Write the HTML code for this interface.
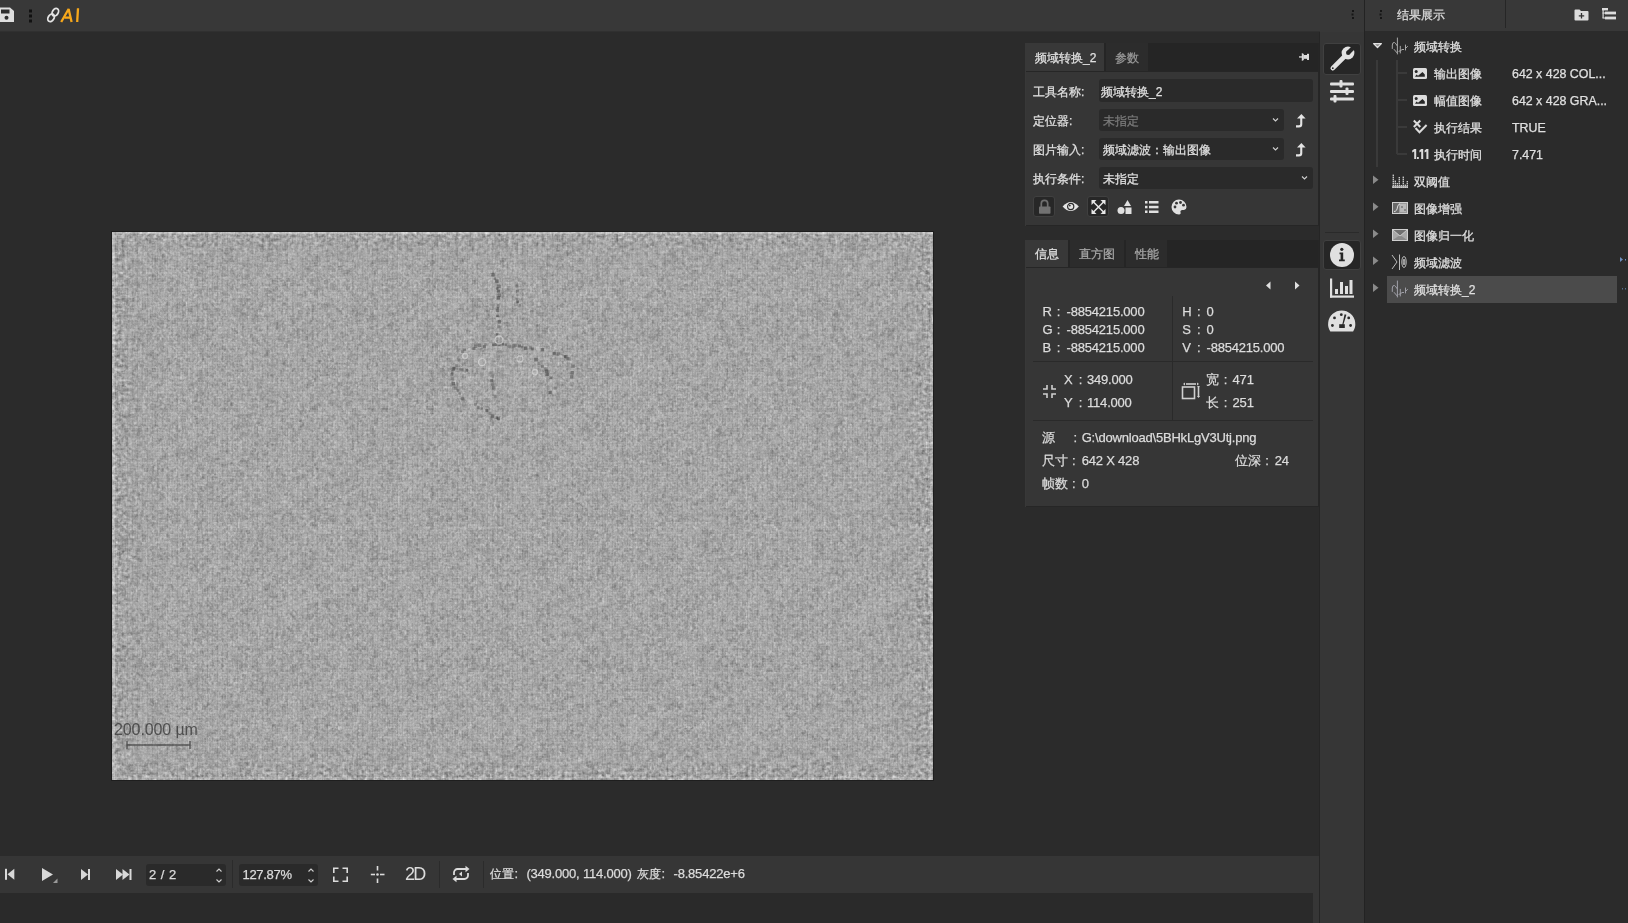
<!DOCTYPE html>
<html><head><meta charset="utf-8">
<style>
*{box-sizing:border-box;margin:0;padding:0}
html,body{width:1628px;height:923px;overflow:hidden;background:#2b2b2b;font-family:"Liberation Sans",sans-serif;font-size:12px;color:#dcdcdc}
.a{position:absolute}
.t{position:absolute;white-space:nowrap;line-height:14px;-webkit-text-stroke:0.25px currentColor}
svg{position:absolute;overflow:visible}
.n{color:#dcdcdc;font-size:13px;letter-spacing:-0.2px}
.inp{position:absolute;background:#2a2a2a;border-radius:3px}
</style></head><body>
<!-- ===== top bar ===== -->
<div class="a" style="left:0;top:0;width:1364px;height:32px;background:#383838"></div><div class="a" style="left:0;top:31px;width:1320px;height:1px;background:#303030"></div>
<div class="a" style="left:1365px;top:0;width:263px;height:31px;background:#383838"></div>
<!-- save icon -->
<svg style="left:0;top:0" width="20" height="30">
<path d="M-2 7.5 H10 L14 11 V22 H-2 Z" fill="#dedede"/>
<rect x="1" y="9.5" width="8.5" height="4" fill="#2e2e2e"/>
<circle cx="6.5" cy="17.8" r="2" fill="#2e2e2e"/>
</svg>
<!-- gripper -->
<svg style="left:28px;top:8px" width="6" height="16">
<rect x="1" y="1.5" width="3" height="3" fill="#111"/><rect x="1" y="6.5" width="3" height="3" fill="#111"/><rect x="1" y="11.5" width="3" height="3" fill="#111"/>
</svg>
<!-- link icon -->
<svg style="left:46px;top:7px" width="16" height="17"><g fill="none" stroke="#e4e4e4" stroke-width="1.8"><ellipse cx="9.3" cy="5.2" rx="4.1" ry="2.9" transform="rotate(-58 9.3 5.2)"/><ellipse cx="5.1" cy="10.8" rx="4.1" ry="2.9" transform="rotate(-58 5.1 10.8)"/></g></svg>
<svg style="left:58px;top:6px" width="24" height="18"><g fill="none" stroke="#f7a81b" stroke-width="2.3" stroke-linejoin="bevel"><path d="M3.2 16 L10.6 3 L13.6 16"/><path d="M6.5 11.6 H12.8"/><path d="M20 2.2 L19.2 16"/></g></svg>
<!-- top grippers -->
<svg style="left:1350px;top:9px" width="6" height="12"><g fill="#161616"><rect x="2" y="1" width="2" height="2"/><rect x="1.5" y="4.5" width="2" height="2"/><rect x="2" y="8" width="2" height="2"/></g></svg>
<svg style="left:1378px;top:9px" width="6" height="12"><g fill="#161616"><rect x="2" y="1" width="2" height="2"/><rect x="1.5" y="4.5" width="2" height="2"/><rect x="2" y="8" width="2" height="2"/></g></svg>

<!-- ===== main view ===== -->
<div class="a" style="left:111px;top:231px;width:823px;height:550px;background:#1e1e1e"></div>
<svg id="img" style="left:112px;top:232px" width="821" height="548">
<defs><filter id="nz" x="0" y="0" width="100%" height="100%" color-interpolation-filters="sRGB">
<feTurbulence type="fractalNoise" baseFrequency="0.42" numOctaves="2" seed="7" result="n"/>
<feColorMatrix type="matrix" values="0.2 0.2 0 0 0.455  0.2 0.2 0 0 0.455  0.2 0.2 0 0 0.455  0 0 0 0 1"/>
</filter>
<filter id="nz2" x="0" y="0" width="100%" height="100%" color-interpolation-filters="sRGB">
<feTurbulence type="fractalNoise" baseFrequency="0.3" numOctaves="2" seed="3" result="n"/>
<feColorMatrix type="matrix" values="0.5 0.5 0 0 0.14  0.5 0.5 0 0 0.14  0.5 0.5 0 0 0.14  0 0 0 0 1"/>
</filter>
<linearGradient id="gl" x1="0" x2="1" y1="0" y2="0"><stop offset="0" stop-color="#fff"/><stop offset="0.05" stop-color="#000"/><stop offset="0.95" stop-color="#000"/><stop offset="1" stop-color="#fff"/></linearGradient>
<linearGradient id="gt" x1="0" x2="0" y1="0" y2="1"><stop offset="0" stop-color="#fff"/><stop offset="0.06" stop-color="#000"/><stop offset="0.94" stop-color="#000"/><stop offset="1" stop-color="#fff"/></linearGradient>
<mask id="mk"><rect width="821" height="548" fill="url(#gl)"/><rect width="821" height="548" fill="url(#gt)" style="mix-blend-mode:lighten"/></mask>
<pattern id="gr" width="5" height="5" patternUnits="userSpaceOnUse"><rect width="5" height="1" fill="#fff" opacity="0.06"/><rect width="1" height="5" fill="#000" opacity="0.05"/></pattern><pattern id="bk" width="148" height="148" patternUnits="userSpaceOnUse"><rect x="0" y="0" width="4" height="4" fill="#000" fill-opacity="0.05"/><rect x="0" y="4" width="4" height="4" fill="#000" fill-opacity="0.05"/><rect x="0" y="12" width="4" height="4" fill="#000" fill-opacity="0.09"/><rect x="0" y="12" width="1" height="4" fill="#fff" fill-opacity="0.1"/><rect x="0" y="16" width="4" height="4" fill="#000" fill-opacity="0.09"/><rect x="0" y="32" width="4" height="4" fill="#000" fill-opacity="0.03"/><rect x="0" y="52" width="4" height="4" fill="#fff" fill-opacity="0.03"/><rect x="0" y="80" width="4" height="4" fill="#fff" fill-opacity="0.08"/><rect x="0" y="88" width="4" height="4" fill="#fff" fill-opacity="0.02"/><rect x="0" y="92" width="4" height="4" fill="#fff" fill-opacity="0.09"/><rect x="0" y="96" width="4" height="4" fill="#fff" fill-opacity="0.05"/><rect x="0" y="104" width="4" height="4" fill="#fff" fill-opacity="0.03"/><rect x="0" y="108" width="4" height="4" fill="#fff" fill-opacity="0.09"/><rect x="0" y="112" width="4" height="4" fill="#fff" fill-opacity="0.03"/><rect x="0" y="128" width="4" height="4" fill="#fff" fill-opacity="0.03"/><rect x="0" y="136" width="4" height="4" fill="#fff" fill-opacity="0.06"/><rect x="0" y="144" width="4" height="4" fill="#000" fill-opacity="0.03"/><rect x="4" y="0" width="4" height="4" fill="#fff" fill-opacity="0.07"/><rect x="4" y="4" width="4" height="4" fill="#000" fill-opacity="0.06"/><rect x="4" y="4" width="1" height="4" fill="#fff" fill-opacity="0.1"/><rect x="4" y="24" width="4" height="4" fill="#000" fill-opacity="0.08"/><rect x="4" y="24" width="1" height="4" fill="#fff" fill-opacity="0.1"/><rect x="4" y="32" width="4" height="4" fill="#000" fill-opacity="0.04"/><rect x="4" y="44" width="4" height="4" fill="#fff" fill-opacity="0.04"/><rect x="4" y="44" width="1" height="4" fill="#fff" fill-opacity="0.1"/><rect x="4" y="48" width="4" height="4" fill="#fff" fill-opacity="0.09"/><rect x="4" y="52" width="4" height="4" fill="#fff" fill-opacity="0.09"/><rect x="4" y="56" width="4" height="4" fill="#000" fill-opacity="0.04"/><rect x="4" y="60" width="4" height="4" fill="#000" fill-opacity="0.07"/><rect x="4" y="60" width="1" height="4" fill="#fff" fill-opacity="0.1"/><rect x="4" y="72" width="4" height="4" fill="#000" fill-opacity="0.07"/><rect x="4" y="76" width="4" height="4" fill="#fff" fill-opacity="0.09"/><rect x="4" y="76" width="1" height="4" fill="#fff" fill-opacity="0.1"/><rect x="4" y="84" width="4" height="4" fill="#000" fill-opacity="0.03"/><rect x="4" y="88" width="4" height="4" fill="#fff" fill-opacity="0.05"/><rect x="4" y="92" width="4" height="4" fill="#fff" fill-opacity="0.04"/><rect x="4" y="116" width="4" height="4" fill="#000" fill-opacity="0.05"/><rect x="4" y="116" width="1" height="4" fill="#fff" fill-opacity="0.1"/><rect x="4" y="120" width="4" height="4" fill="#000" fill-opacity="0.09"/><rect x="4" y="120" width="1" height="4" fill="#fff" fill-opacity="0.1"/><rect x="4" y="124" width="4" height="4" fill="#fff" fill-opacity="0.05"/><rect x="4" y="136" width="4" height="4" fill="#fff" fill-opacity="0.05"/><rect x="4" y="140" width="4" height="4" fill="#000" fill-opacity="0.04"/><rect x="4" y="140" width="1" height="4" fill="#fff" fill-opacity="0.1"/><rect x="8" y="8" width="4" height="4" fill="#000" fill-opacity="0.08"/><rect x="8" y="8" width="1" height="4" fill="#fff" fill-opacity="0.1"/><rect x="8" y="20" width="4" height="4" fill="#000" fill-opacity="0.09"/><rect x="8" y="44" width="4" height="4" fill="#000" fill-opacity="0.03"/><rect x="8" y="48" width="4" height="4" fill="#fff" fill-opacity="0.08"/><rect x="8" y="56" width="4" height="4" fill="#000" fill-opacity="0.04"/><rect x="8" y="64" width="4" height="4" fill="#000" fill-opacity="0.03"/><rect x="8" y="76" width="4" height="4" fill="#fff" fill-opacity="0.03"/><rect x="8" y="80" width="4" height="4" fill="#fff" fill-opacity="0.05"/><rect x="8" y="100" width="4" height="4" fill="#fff" fill-opacity="0.07"/><rect x="8" y="104" width="4" height="4" fill="#000" fill-opacity="0.05"/><rect x="8" y="108" width="4" height="4" fill="#fff" fill-opacity="0.05"/><rect x="8" y="112" width="4" height="4" fill="#000" fill-opacity="0.03"/><rect x="8" y="116" width="4" height="4" fill="#000" fill-opacity="0.06"/><rect x="8" y="124" width="4" height="4" fill="#fff" fill-opacity="0.05"/><rect x="8" y="132" width="4" height="4" fill="#000" fill-opacity="0.03"/><rect x="8" y="136" width="4" height="4" fill="#000" fill-opacity="0.03"/><rect x="8" y="136" width="1" height="4" fill="#fff" fill-opacity="0.1"/><rect x="8" y="140" width="4" height="4" fill="#000" fill-opacity="0.04"/><rect x="12" y="0" width="4" height="4" fill="#fff" fill-opacity="0.06"/><rect x="12" y="8" width="4" height="4" fill="#000" fill-opacity="0.05"/><rect x="12" y="12" width="4" height="4" fill="#000" fill-opacity="0.03"/><rect x="12" y="16" width="4" height="4" fill="#fff" fill-opacity="0.05"/><rect x="12" y="20" width="4" height="4" fill="#000" fill-opacity="0.05"/><rect x="12" y="24" width="4" height="4" fill="#fff" fill-opacity="0.06"/><rect x="12" y="28" width="4" height="4" fill="#fff" fill-opacity="0.09"/><rect x="12" y="44" width="4" height="4" fill="#fff" fill-opacity="0.05"/><rect x="12" y="48" width="4" height="4" fill="#000" fill-opacity="0.08"/><rect x="12" y="56" width="4" height="4" fill="#000" fill-opacity="0.06"/><rect x="12" y="56" width="1" height="4" fill="#fff" fill-opacity="0.1"/><rect x="12" y="64" width="4" height="4" fill="#000" fill-opacity="0.05"/><rect x="12" y="68" width="4" height="4" fill="#000" fill-opacity="0.05"/><rect x="12" y="72" width="4" height="4" fill="#fff" fill-opacity="0.03"/><rect x="12" y="88" width="4" height="4" fill="#fff" fill-opacity="0.04"/><rect x="12" y="96" width="4" height="4" fill="#fff" fill-opacity="0.06"/><rect x="12" y="100" width="4" height="4" fill="#fff" fill-opacity="0.04"/><rect x="12" y="132" width="4" height="4" fill="#000" fill-opacity="0.04"/><rect x="12" y="140" width="4" height="4" fill="#000" fill-opacity="0.02"/><rect x="16" y="0" width="4" height="4" fill="#fff" fill-opacity="0.04"/><rect x="16" y="20" width="4" height="4" fill="#000" fill-opacity="0.03"/><rect x="16" y="20" width="1" height="4" fill="#fff" fill-opacity="0.1"/><rect x="16" y="32" width="4" height="4" fill="#000" fill-opacity="0.03"/><rect x="16" y="40" width="4" height="4" fill="#fff" fill-opacity="0.07"/><rect x="16" y="52" width="4" height="4" fill="#000" fill-opacity="0.05"/><rect x="16" y="56" width="4" height="4" fill="#fff" fill-opacity="0.03"/><rect x="16" y="60" width="4" height="4" fill="#fff" fill-opacity="0.04"/><rect x="16" y="64" width="4" height="4" fill="#fff" fill-opacity="0.05"/><rect x="16" y="80" width="4" height="4" fill="#fff" fill-opacity="0.04"/><rect x="16" y="84" width="4" height="4" fill="#fff" fill-opacity="0.03"/><rect x="16" y="84" width="1" height="4" fill="#fff" fill-opacity="0.1"/><rect x="16" y="88" width="4" height="4" fill="#000" fill-opacity="0.06"/><rect x="16" y="92" width="4" height="4" fill="#000" fill-opacity="0.06"/><rect x="16" y="100" width="4" height="4" fill="#fff" fill-opacity="0.03"/><rect x="16" y="104" width="4" height="4" fill="#000" fill-opacity="0.07"/><rect x="16" y="108" width="4" height="4" fill="#fff" fill-opacity="0.07"/><rect x="16" y="116" width="4" height="4" fill="#fff" fill-opacity="0.09"/><rect x="16" y="120" width="4" height="4" fill="#000" fill-opacity="0.03"/><rect x="16" y="128" width="4" height="4" fill="#000" fill-opacity="0.03"/><rect x="16" y="136" width="4" height="4" fill="#fff" fill-opacity="0.04"/><rect x="16" y="140" width="4" height="4" fill="#fff" fill-opacity="0.04"/><rect x="20" y="0" width="4" height="4" fill="#000" fill-opacity="0.07"/><rect x="20" y="0" width="1" height="4" fill="#fff" fill-opacity="0.1"/><rect x="20" y="4" width="4" height="4" fill="#000" fill-opacity="0.03"/><rect x="20" y="16" width="4" height="4" fill="#000" fill-opacity="0.03"/><rect x="20" y="20" width="4" height="4" fill="#fff" fill-opacity="0.07"/><rect x="20" y="24" width="4" height="4" fill="#fff" fill-opacity="0.09"/><rect x="20" y="28" width="4" height="4" fill="#000" fill-opacity="0.06"/><rect x="20" y="48" width="4" height="4" fill="#000" fill-opacity="0.03"/><rect x="20" y="56" width="4" height="4" fill="#fff" fill-opacity="0.03"/><rect x="20" y="60" width="4" height="4" fill="#000" fill-opacity="0.04"/><rect x="20" y="80" width="4" height="4" fill="#fff" fill-opacity="0.04"/><rect x="20" y="84" width="4" height="4" fill="#fff" fill-opacity="0.04"/><rect x="20" y="84" width="1" height="4" fill="#fff" fill-opacity="0.1"/><rect x="20" y="88" width="4" height="4" fill="#000" fill-opacity="0.03"/><rect x="20" y="92" width="4" height="4" fill="#000" fill-opacity="0.05"/><rect x="20" y="100" width="4" height="4" fill="#000" fill-opacity="0.03"/><rect x="20" y="104" width="4" height="4" fill="#000" fill-opacity="0.03"/><rect x="20" y="108" width="4" height="4" fill="#000" fill-opacity="0.06"/><rect x="20" y="108" width="1" height="4" fill="#fff" fill-opacity="0.1"/><rect x="20" y="112" width="4" height="4" fill="#fff" fill-opacity="0.05"/><rect x="20" y="124" width="4" height="4" fill="#fff" fill-opacity="0.03"/><rect x="20" y="128" width="4" height="4" fill="#000" fill-opacity="0.05"/><rect x="20" y="136" width="4" height="4" fill="#000" fill-opacity="0.09"/><rect x="20" y="136" width="1" height="4" fill="#fff" fill-opacity="0.1"/><rect x="20" y="140" width="4" height="4" fill="#000" fill-opacity="0.05"/><rect x="24" y="8" width="4" height="4" fill="#000" fill-opacity="0.06"/><rect x="24" y="8" width="1" height="4" fill="#fff" fill-opacity="0.1"/><rect x="24" y="12" width="4" height="4" fill="#000" fill-opacity="0.04"/><rect x="24" y="16" width="4" height="4" fill="#fff" fill-opacity="0.03"/><rect x="24" y="20" width="4" height="4" fill="#000" fill-opacity="0.06"/><rect x="24" y="20" width="1" height="4" fill="#fff" fill-opacity="0.1"/><rect x="24" y="28" width="4" height="4" fill="#000" fill-opacity="0.09"/><rect x="24" y="48" width="4" height="4" fill="#000" fill-opacity="0.06"/><rect x="24" y="52" width="4" height="4" fill="#000" fill-opacity="0.08"/><rect x="24" y="52" width="1" height="4" fill="#fff" fill-opacity="0.1"/><rect x="24" y="60" width="4" height="4" fill="#fff" fill-opacity="0.09"/><rect x="24" y="60" width="1" height="4" fill="#fff" fill-opacity="0.1"/><rect x="24" y="64" width="4" height="4" fill="#000" fill-opacity="0.03"/><rect x="24" y="64" width="1" height="4" fill="#fff" fill-opacity="0.1"/><rect x="24" y="68" width="4" height="4" fill="#000" fill-opacity="0.03"/><rect x="24" y="88" width="4" height="4" fill="#fff" fill-opacity="0.05"/><rect x="24" y="104" width="4" height="4" fill="#000" fill-opacity="0.03"/><rect x="24" y="112" width="4" height="4" fill="#000" fill-opacity="0.09"/><rect x="24" y="120" width="4" height="4" fill="#fff" fill-opacity="0.06"/><rect x="24" y="120" width="1" height="4" fill="#fff" fill-opacity="0.1"/><rect x="24" y="128" width="4" height="4" fill="#000" fill-opacity="0.03"/><rect x="24" y="132" width="4" height="4" fill="#000" fill-opacity="0.03"/><rect x="24" y="144" width="4" height="4" fill="#000" fill-opacity="0.03"/><rect x="28" y="16" width="4" height="4" fill="#fff" fill-opacity="0.04"/><rect x="28" y="20" width="4" height="4" fill="#fff" fill-opacity="0.03"/><rect x="28" y="24" width="4" height="4" fill="#fff" fill-opacity="0.06"/><rect x="28" y="24" width="1" height="4" fill="#fff" fill-opacity="0.1"/><rect x="28" y="36" width="4" height="4" fill="#fff" fill-opacity="0.04"/><rect x="28" y="40" width="4" height="4" fill="#fff" fill-opacity="0.04"/><rect x="28" y="44" width="4" height="4" fill="#000" fill-opacity="0.04"/><rect x="28" y="52" width="4" height="4" fill="#fff" fill-opacity="0.06"/><rect x="28" y="52" width="1" height="4" fill="#fff" fill-opacity="0.1"/><rect x="28" y="60" width="4" height="4" fill="#fff" fill-opacity="0.06"/><rect x="28" y="64" width="4" height="4" fill="#fff" fill-opacity="0.08"/><rect x="28" y="68" width="4" height="4" fill="#fff" fill-opacity="0.08"/><rect x="28" y="72" width="4" height="4" fill="#fff" fill-opacity="0.07"/><rect x="28" y="76" width="4" height="4" fill="#fff" fill-opacity="0.04"/><rect x="28" y="80" width="4" height="4" fill="#fff" fill-opacity="0.04"/><rect x="28" y="84" width="4" height="4" fill="#000" fill-opacity="0.03"/><rect x="28" y="88" width="4" height="4" fill="#fff" fill-opacity="0.05"/><rect x="28" y="92" width="4" height="4" fill="#fff" fill-opacity="0.05"/><rect x="28" y="96" width="4" height="4" fill="#fff" fill-opacity="0.06"/><rect x="28" y="100" width="4" height="4" fill="#000" fill-opacity="0.07"/><rect x="28" y="104" width="4" height="4" fill="#fff" fill-opacity="0.03"/><rect x="28" y="108" width="4" height="4" fill="#000" fill-opacity="0.06"/><rect x="28" y="112" width="4" height="4" fill="#000" fill-opacity="0.03"/><rect x="28" y="112" width="1" height="4" fill="#fff" fill-opacity="0.1"/><rect x="28" y="116" width="4" height="4" fill="#fff" fill-opacity="0.03"/><rect x="28" y="116" width="1" height="4" fill="#fff" fill-opacity="0.1"/><rect x="28" y="124" width="4" height="4" fill="#fff" fill-opacity="0.04"/><rect x="28" y="128" width="4" height="4" fill="#000" fill-opacity="0.03"/><rect x="28" y="128" width="1" height="4" fill="#fff" fill-opacity="0.1"/><rect x="28" y="132" width="4" height="4" fill="#000" fill-opacity="0.08"/><rect x="28" y="140" width="4" height="4" fill="#000" fill-opacity="0.04"/><rect x="28" y="140" width="1" height="4" fill="#fff" fill-opacity="0.1"/><rect x="32" y="8" width="4" height="4" fill="#000" fill-opacity="0.03"/><rect x="32" y="12" width="4" height="4" fill="#fff" fill-opacity="0.03"/><rect x="32" y="12" width="1" height="4" fill="#fff" fill-opacity="0.1"/><rect x="32" y="20" width="4" height="4" fill="#fff" fill-opacity="0.03"/><rect x="32" y="20" width="1" height="4" fill="#fff" fill-opacity="0.1"/><rect x="32" y="28" width="4" height="4" fill="#fff" fill-opacity="0.03"/><rect x="32" y="32" width="4" height="4" fill="#fff" fill-opacity="0.09"/><rect x="32" y="40" width="4" height="4" fill="#fff" fill-opacity="0.06"/><rect x="32" y="48" width="4" height="4" fill="#000" fill-opacity="0.09"/><rect x="32" y="48" width="1" height="4" fill="#fff" fill-opacity="0.1"/><rect x="32" y="60" width="4" height="4" fill="#000" fill-opacity="0.03"/><rect x="32" y="88" width="4" height="4" fill="#000" fill-opacity="0.09"/><rect x="32" y="92" width="4" height="4" fill="#fff" fill-opacity="0.06"/><rect x="32" y="96" width="4" height="4" fill="#000" fill-opacity="0.03"/><rect x="32" y="116" width="4" height="4" fill="#fff" fill-opacity="0.06"/><rect x="32" y="120" width="4" height="4" fill="#000" fill-opacity="0.03"/><rect x="32" y="124" width="4" height="4" fill="#000" fill-opacity="0.03"/><rect x="32" y="124" width="1" height="4" fill="#fff" fill-opacity="0.1"/><rect x="32" y="128" width="4" height="4" fill="#fff" fill-opacity="0.06"/><rect x="32" y="132" width="4" height="4" fill="#fff" fill-opacity="0.03"/><rect x="32" y="132" width="1" height="4" fill="#fff" fill-opacity="0.1"/><rect x="32" y="136" width="4" height="4" fill="#000" fill-opacity="0.09"/><rect x="32" y="140" width="4" height="4" fill="#000" fill-opacity="0.04"/><rect x="36" y="4" width="4" height="4" fill="#fff" fill-opacity="0.04"/><rect x="36" y="8" width="4" height="4" fill="#000" fill-opacity="0.03"/><rect x="36" y="8" width="1" height="4" fill="#fff" fill-opacity="0.1"/><rect x="36" y="32" width="4" height="4" fill="#fff" fill-opacity="0.04"/><rect x="36" y="44" width="4" height="4" fill="#fff" fill-opacity="0.02"/><rect x="36" y="52" width="4" height="4" fill="#000" fill-opacity="0.04"/><rect x="36" y="52" width="1" height="4" fill="#fff" fill-opacity="0.1"/><rect x="36" y="56" width="4" height="4" fill="#fff" fill-opacity="0.03"/><rect x="36" y="60" width="4" height="4" fill="#fff" fill-opacity="0.04"/><rect x="36" y="64" width="4" height="4" fill="#fff" fill-opacity="0.03"/><rect x="36" y="76" width="4" height="4" fill="#fff" fill-opacity="0.05"/><rect x="36" y="84" width="4" height="4" fill="#000" fill-opacity="0.04"/><rect x="36" y="96" width="4" height="4" fill="#000" fill-opacity="0.09"/><rect x="36" y="100" width="4" height="4" fill="#000" fill-opacity="0.07"/><rect x="36" y="108" width="4" height="4" fill="#fff" fill-opacity="0.03"/><rect x="36" y="108" width="1" height="4" fill="#fff" fill-opacity="0.1"/><rect x="36" y="120" width="4" height="4" fill="#000" fill-opacity="0.07"/><rect x="36" y="140" width="4" height="4" fill="#000" fill-opacity="0.05"/><rect x="40" y="0" width="4" height="4" fill="#fff" fill-opacity="0.06"/><rect x="40" y="0" width="1" height="4" fill="#fff" fill-opacity="0.1"/><rect x="40" y="12" width="4" height="4" fill="#fff" fill-opacity="0.03"/><rect x="40" y="16" width="4" height="4" fill="#fff" fill-opacity="0.03"/><rect x="40" y="20" width="4" height="4" fill="#fff" fill-opacity="0.02"/><rect x="40" y="24" width="4" height="4" fill="#000" fill-opacity="0.08"/><rect x="40" y="28" width="4" height="4" fill="#000" fill-opacity="0.03"/><rect x="40" y="32" width="4" height="4" fill="#000" fill-opacity="0.04"/><rect x="40" y="40" width="4" height="4" fill="#000" fill-opacity="0.06"/><rect x="40" y="44" width="4" height="4" fill="#000" fill-opacity="0.08"/><rect x="40" y="52" width="4" height="4" fill="#fff" fill-opacity="0.07"/><rect x="40" y="68" width="4" height="4" fill="#fff" fill-opacity="0.03"/><rect x="40" y="84" width="4" height="4" fill="#000" fill-opacity="0.05"/><rect x="40" y="84" width="1" height="4" fill="#fff" fill-opacity="0.1"/><rect x="40" y="96" width="4" height="4" fill="#000" fill-opacity="0.05"/><rect x="40" y="100" width="4" height="4" fill="#fff" fill-opacity="0.06"/><rect x="40" y="108" width="4" height="4" fill="#fff" fill-opacity="0.04"/><rect x="40" y="120" width="4" height="4" fill="#000" fill-opacity="0.06"/><rect x="40" y="124" width="4" height="4" fill="#000" fill-opacity="0.04"/><rect x="40" y="124" width="1" height="4" fill="#fff" fill-opacity="0.1"/><rect x="40" y="128" width="4" height="4" fill="#000" fill-opacity="0.02"/><rect x="40" y="136" width="4" height="4" fill="#000" fill-opacity="0.09"/><rect x="40" y="140" width="4" height="4" fill="#fff" fill-opacity="0.03"/><rect x="40" y="140" width="1" height="4" fill="#fff" fill-opacity="0.1"/><rect x="40" y="144" width="4" height="4" fill="#000" fill-opacity="0.04"/><rect x="44" y="0" width="4" height="4" fill="#fff" fill-opacity="0.08"/><rect x="44" y="4" width="4" height="4" fill="#000" fill-opacity="0.06"/><rect x="44" y="8" width="4" height="4" fill="#fff" fill-opacity="0.02"/><rect x="44" y="12" width="4" height="4" fill="#fff" fill-opacity="0.05"/><rect x="44" y="12" width="1" height="4" fill="#fff" fill-opacity="0.1"/><rect x="44" y="24" width="4" height="4" fill="#000" fill-opacity="0.04"/><rect x="44" y="24" width="1" height="4" fill="#fff" fill-opacity="0.1"/><rect x="44" y="36" width="4" height="4" fill="#000" fill-opacity="0.04"/><rect x="44" y="56" width="4" height="4" fill="#fff" fill-opacity="0.03"/><rect x="44" y="60" width="4" height="4" fill="#000" fill-opacity="0.04"/><rect x="44" y="64" width="4" height="4" fill="#fff" fill-opacity="0.05"/><rect x="44" y="72" width="4" height="4" fill="#fff" fill-opacity="0.09"/><rect x="44" y="76" width="4" height="4" fill="#fff" fill-opacity="0.03"/><rect x="44" y="80" width="4" height="4" fill="#000" fill-opacity="0.04"/><rect x="44" y="80" width="1" height="4" fill="#fff" fill-opacity="0.1"/><rect x="44" y="88" width="4" height="4" fill="#000" fill-opacity="0.04"/><rect x="44" y="88" width="1" height="4" fill="#fff" fill-opacity="0.1"/><rect x="44" y="104" width="4" height="4" fill="#000" fill-opacity="0.08"/><rect x="44" y="104" width="1" height="4" fill="#fff" fill-opacity="0.1"/><rect x="44" y="112" width="4" height="4" fill="#000" fill-opacity="0.03"/><rect x="44" y="116" width="4" height="4" fill="#fff" fill-opacity="0.04"/><rect x="44" y="120" width="4" height="4" fill="#000" fill-opacity="0.04"/><rect x="44" y="124" width="4" height="4" fill="#fff" fill-opacity="0.05"/><rect x="44" y="136" width="4" height="4" fill="#fff" fill-opacity="0.04"/><rect x="44" y="140" width="4" height="4" fill="#fff" fill-opacity="0.03"/><rect x="48" y="0" width="4" height="4" fill="#000" fill-opacity="0.06"/><rect x="48" y="8" width="4" height="4" fill="#fff" fill-opacity="0.07"/><rect x="48" y="20" width="4" height="4" fill="#000" fill-opacity="0.06"/><rect x="48" y="28" width="4" height="4" fill="#000" fill-opacity="0.04"/><rect x="48" y="36" width="4" height="4" fill="#000" fill-opacity="0.04"/><rect x="48" y="48" width="4" height="4" fill="#000" fill-opacity="0.03"/><rect x="48" y="52" width="4" height="4" fill="#fff" fill-opacity="0.04"/><rect x="48" y="56" width="4" height="4" fill="#000" fill-opacity="0.03"/><rect x="48" y="60" width="4" height="4" fill="#fff" fill-opacity="0.09"/><rect x="48" y="64" width="4" height="4" fill="#fff" fill-opacity="0.06"/><rect x="48" y="68" width="4" height="4" fill="#fff" fill-opacity="0.03"/><rect x="48" y="72" width="4" height="4" fill="#fff" fill-opacity="0.05"/><rect x="48" y="76" width="4" height="4" fill="#000" fill-opacity="0.04"/><rect x="48" y="88" width="4" height="4" fill="#000" fill-opacity="0.08"/><rect x="48" y="96" width="4" height="4" fill="#fff" fill-opacity="0.05"/><rect x="48" y="104" width="4" height="4" fill="#fff" fill-opacity="0.04"/><rect x="48" y="104" width="1" height="4" fill="#fff" fill-opacity="0.1"/><rect x="48" y="112" width="4" height="4" fill="#000" fill-opacity="0.05"/><rect x="48" y="116" width="4" height="4" fill="#000" fill-opacity="0.07"/><rect x="48" y="132" width="4" height="4" fill="#000" fill-opacity="0.05"/><rect x="48" y="136" width="4" height="4" fill="#000" fill-opacity="0.06"/><rect x="48" y="140" width="4" height="4" fill="#fff" fill-opacity="0.06"/><rect x="52" y="0" width="4" height="4" fill="#fff" fill-opacity="0.06"/><rect x="52" y="4" width="4" height="4" fill="#fff" fill-opacity="0.03"/><rect x="52" y="8" width="4" height="4" fill="#fff" fill-opacity="0.05"/><rect x="52" y="12" width="4" height="4" fill="#fff" fill-opacity="0.05"/><rect x="52" y="20" width="4" height="4" fill="#fff" fill-opacity="0.05"/><rect x="52" y="24" width="4" height="4" fill="#000" fill-opacity="0.04"/><rect x="52" y="28" width="4" height="4" fill="#000" fill-opacity="0.09"/><rect x="52" y="40" width="4" height="4" fill="#fff" fill-opacity="0.05"/><rect x="52" y="52" width="4" height="4" fill="#fff" fill-opacity="0.04"/><rect x="52" y="56" width="4" height="4" fill="#fff" fill-opacity="0.03"/><rect x="52" y="56" width="1" height="4" fill="#fff" fill-opacity="0.1"/><rect x="52" y="64" width="4" height="4" fill="#fff" fill-opacity="0.05"/><rect x="52" y="72" width="4" height="4" fill="#000" fill-opacity="0.06"/><rect x="52" y="72" width="1" height="4" fill="#fff" fill-opacity="0.1"/><rect x="52" y="76" width="4" height="4" fill="#000" fill-opacity="0.08"/><rect x="52" y="84" width="4" height="4" fill="#000" fill-opacity="0.03"/><rect x="52" y="88" width="4" height="4" fill="#fff" fill-opacity="0.07"/><rect x="52" y="96" width="4" height="4" fill="#fff" fill-opacity="0.06"/><rect x="52" y="136" width="4" height="4" fill="#000" fill-opacity="0.07"/><rect x="52" y="144" width="4" height="4" fill="#000" fill-opacity="0.06"/><rect x="56" y="0" width="4" height="4" fill="#fff" fill-opacity="0.05"/><rect x="56" y="16" width="4" height="4" fill="#fff" fill-opacity="0.02"/><rect x="56" y="24" width="4" height="4" fill="#000" fill-opacity="0.06"/><rect x="56" y="32" width="4" height="4" fill="#fff" fill-opacity="0.04"/><rect x="56" y="48" width="4" height="4" fill="#000" fill-opacity="0.03"/><rect x="56" y="56" width="4" height="4" fill="#000" fill-opacity="0.09"/><rect x="56" y="64" width="4" height="4" fill="#fff" fill-opacity="0.06"/><rect x="56" y="68" width="4" height="4" fill="#fff" fill-opacity="0.03"/><rect x="56" y="72" width="4" height="4" fill="#fff" fill-opacity="0.03"/><rect x="56" y="76" width="4" height="4" fill="#fff" fill-opacity="0.03"/><rect x="56" y="80" width="4" height="4" fill="#fff" fill-opacity="0.03"/><rect x="56" y="88" width="4" height="4" fill="#000" fill-opacity="0.06"/><rect x="56" y="96" width="4" height="4" fill="#000" fill-opacity="0.03"/><rect x="56" y="104" width="4" height="4" fill="#fff" fill-opacity="0.03"/><rect x="56" y="104" width="1" height="4" fill="#fff" fill-opacity="0.1"/><rect x="56" y="108" width="4" height="4" fill="#000" fill-opacity="0.04"/><rect x="56" y="116" width="4" height="4" fill="#fff" fill-opacity="0.06"/><rect x="56" y="116" width="1" height="4" fill="#fff" fill-opacity="0.1"/><rect x="56" y="128" width="4" height="4" fill="#000" fill-opacity="0.09"/><rect x="56" y="136" width="4" height="4" fill="#000" fill-opacity="0.07"/><rect x="56" y="136" width="1" height="4" fill="#fff" fill-opacity="0.1"/><rect x="56" y="140" width="4" height="4" fill="#fff" fill-opacity="0.06"/><rect x="60" y="8" width="4" height="4" fill="#000" fill-opacity="0.04"/><rect x="60" y="8" width="1" height="4" fill="#fff" fill-opacity="0.1"/><rect x="60" y="16" width="4" height="4" fill="#fff" fill-opacity="0.04"/><rect x="60" y="32" width="4" height="4" fill="#fff" fill-opacity="0.09"/><rect x="60" y="48" width="4" height="4" fill="#fff" fill-opacity="0.09"/><rect x="60" y="60" width="4" height="4" fill="#000" fill-opacity="0.05"/><rect x="60" y="64" width="4" height="4" fill="#fff" fill-opacity="0.04"/><rect x="60" y="68" width="4" height="4" fill="#fff" fill-opacity="0.05"/><rect x="60" y="72" width="4" height="4" fill="#000" fill-opacity="0.03"/><rect x="60" y="72" width="1" height="4" fill="#fff" fill-opacity="0.1"/><rect x="60" y="76" width="4" height="4" fill="#fff" fill-opacity="0.07"/><rect x="60" y="84" width="4" height="4" fill="#fff" fill-opacity="0.05"/><rect x="60" y="88" width="4" height="4" fill="#000" fill-opacity="0.05"/><rect x="60" y="92" width="4" height="4" fill="#fff" fill-opacity="0.07"/><rect x="60" y="100" width="4" height="4" fill="#fff" fill-opacity="0.04"/><rect x="60" y="104" width="4" height="4" fill="#fff" fill-opacity="0.06"/><rect x="60" y="108" width="4" height="4" fill="#fff" fill-opacity="0.03"/><rect x="60" y="120" width="4" height="4" fill="#fff" fill-opacity="0.04"/><rect x="60" y="136" width="4" height="4" fill="#fff" fill-opacity="0.04"/><rect x="60" y="136" width="1" height="4" fill="#fff" fill-opacity="0.1"/><rect x="60" y="140" width="4" height="4" fill="#000" fill-opacity="0.06"/><rect x="60" y="144" width="4" height="4" fill="#fff" fill-opacity="0.06"/><rect x="60" y="144" width="1" height="4" fill="#fff" fill-opacity="0.1"/><rect x="64" y="0" width="4" height="4" fill="#fff" fill-opacity="0.07"/><rect x="64" y="20" width="4" height="4" fill="#fff" fill-opacity="0.09"/><rect x="64" y="24" width="4" height="4" fill="#fff" fill-opacity="0.03"/><rect x="64" y="36" width="4" height="4" fill="#fff" fill-opacity="0.07"/><rect x="64" y="48" width="4" height="4" fill="#000" fill-opacity="0.09"/><rect x="64" y="64" width="4" height="4" fill="#000" fill-opacity="0.02"/><rect x="64" y="68" width="4" height="4" fill="#000" fill-opacity="0.03"/><rect x="64" y="72" width="4" height="4" fill="#000" fill-opacity="0.09"/><rect x="64" y="76" width="4" height="4" fill="#000" fill-opacity="0.05"/><rect x="64" y="84" width="4" height="4" fill="#fff" fill-opacity="0.05"/><rect x="64" y="88" width="4" height="4" fill="#fff" fill-opacity="0.03"/><rect x="64" y="92" width="4" height="4" fill="#fff" fill-opacity="0.03"/><rect x="64" y="92" width="1" height="4" fill="#fff" fill-opacity="0.1"/><rect x="64" y="100" width="4" height="4" fill="#000" fill-opacity="0.04"/><rect x="64" y="104" width="4" height="4" fill="#000" fill-opacity="0.05"/><rect x="64" y="104" width="1" height="4" fill="#fff" fill-opacity="0.1"/><rect x="64" y="108" width="4" height="4" fill="#000" fill-opacity="0.05"/><rect x="64" y="112" width="4" height="4" fill="#fff" fill-opacity="0.04"/><rect x="64" y="120" width="4" height="4" fill="#fff" fill-opacity="0.03"/><rect x="64" y="128" width="4" height="4" fill="#000" fill-opacity="0.05"/><rect x="64" y="132" width="4" height="4" fill="#000" fill-opacity="0.08"/><rect x="64" y="140" width="4" height="4" fill="#000" fill-opacity="0.09"/><rect x="64" y="144" width="4" height="4" fill="#fff" fill-opacity="0.03"/><rect x="64" y="144" width="1" height="4" fill="#fff" fill-opacity="0.1"/><rect x="68" y="12" width="4" height="4" fill="#000" fill-opacity="0.06"/><rect x="68" y="20" width="4" height="4" fill="#000" fill-opacity="0.07"/><rect x="68" y="24" width="4" height="4" fill="#fff" fill-opacity="0.06"/><rect x="68" y="36" width="4" height="4" fill="#000" fill-opacity="0.03"/><rect x="68" y="40" width="4" height="4" fill="#fff" fill-opacity="0.04"/><rect x="68" y="52" width="4" height="4" fill="#fff" fill-opacity="0.03"/><rect x="68" y="52" width="1" height="4" fill="#fff" fill-opacity="0.1"/><rect x="68" y="60" width="4" height="4" fill="#fff" fill-opacity="0.03"/><rect x="68" y="72" width="4" height="4" fill="#000" fill-opacity="0.06"/><rect x="68" y="76" width="4" height="4" fill="#fff" fill-opacity="0.03"/><rect x="68" y="80" width="4" height="4" fill="#000" fill-opacity="0.05"/><rect x="68" y="88" width="4" height="4" fill="#fff" fill-opacity="0.03"/><rect x="68" y="92" width="4" height="4" fill="#000" fill-opacity="0.08"/><rect x="68" y="92" width="1" height="4" fill="#fff" fill-opacity="0.1"/><rect x="68" y="96" width="4" height="4" fill="#fff" fill-opacity="0.03"/><rect x="68" y="96" width="1" height="4" fill="#fff" fill-opacity="0.1"/><rect x="68" y="100" width="4" height="4" fill="#fff" fill-opacity="0.06"/><rect x="68" y="120" width="4" height="4" fill="#000" fill-opacity="0.04"/><rect x="68" y="124" width="4" height="4" fill="#fff" fill-opacity="0.05"/><rect x="68" y="124" width="1" height="4" fill="#fff" fill-opacity="0.1"/><rect x="68" y="136" width="4" height="4" fill="#000" fill-opacity="0.05"/><rect x="68" y="144" width="4" height="4" fill="#fff" fill-opacity="0.09"/><rect x="68" y="144" width="1" height="4" fill="#fff" fill-opacity="0.1"/><rect x="72" y="0" width="4" height="4" fill="#fff" fill-opacity="0.06"/><rect x="72" y="0" width="1" height="4" fill="#fff" fill-opacity="0.1"/><rect x="72" y="8" width="4" height="4" fill="#fff" fill-opacity="0.04"/><rect x="72" y="16" width="4" height="4" fill="#fff" fill-opacity="0.05"/><rect x="72" y="16" width="1" height="4" fill="#fff" fill-opacity="0.1"/><rect x="72" y="20" width="4" height="4" fill="#000" fill-opacity="0.04"/><rect x="72" y="36" width="4" height="4" fill="#000" fill-opacity="0.03"/><rect x="72" y="40" width="4" height="4" fill="#fff" fill-opacity="0.07"/><rect x="72" y="48" width="4" height="4" fill="#fff" fill-opacity="0.04"/><rect x="72" y="48" width="1" height="4" fill="#fff" fill-opacity="0.1"/><rect x="72" y="52" width="4" height="4" fill="#000" fill-opacity="0.03"/><rect x="72" y="60" width="4" height="4" fill="#fff" fill-opacity="0.09"/><rect x="72" y="64" width="4" height="4" fill="#fff" fill-opacity="0.03"/><rect x="72" y="64" width="1" height="4" fill="#fff" fill-opacity="0.1"/><rect x="72" y="72" width="4" height="4" fill="#000" fill-opacity="0.05"/><rect x="72" y="76" width="4" height="4" fill="#fff" fill-opacity="0.03"/><rect x="72" y="76" width="1" height="4" fill="#fff" fill-opacity="0.1"/><rect x="72" y="80" width="4" height="4" fill="#fff" fill-opacity="0.03"/><rect x="72" y="84" width="4" height="4" fill="#fff" fill-opacity="0.04"/><rect x="72" y="88" width="4" height="4" fill="#000" fill-opacity="0.08"/><rect x="72" y="88" width="1" height="4" fill="#fff" fill-opacity="0.1"/><rect x="72" y="92" width="4" height="4" fill="#000" fill-opacity="0.04"/><rect x="72" y="96" width="4" height="4" fill="#000" fill-opacity="0.05"/><rect x="72" y="104" width="4" height="4" fill="#000" fill-opacity="0.06"/><rect x="72" y="116" width="4" height="4" fill="#000" fill-opacity="0.07"/><rect x="72" y="120" width="4" height="4" fill="#fff" fill-opacity="0.02"/><rect x="72" y="128" width="4" height="4" fill="#fff" fill-opacity="0.02"/><rect x="72" y="136" width="4" height="4" fill="#000" fill-opacity="0.06"/><rect x="72" y="136" width="1" height="4" fill="#fff" fill-opacity="0.1"/><rect x="72" y="140" width="4" height="4" fill="#000" fill-opacity="0.08"/><rect x="76" y="4" width="4" height="4" fill="#000" fill-opacity="0.05"/><rect x="76" y="8" width="4" height="4" fill="#000" fill-opacity="0.06"/><rect x="76" y="8" width="1" height="4" fill="#fff" fill-opacity="0.1"/><rect x="76" y="12" width="4" height="4" fill="#fff" fill-opacity="0.04"/><rect x="76" y="24" width="4" height="4" fill="#000" fill-opacity="0.03"/><rect x="76" y="36" width="4" height="4" fill="#fff" fill-opacity="0.06"/><rect x="76" y="40" width="4" height="4" fill="#fff" fill-opacity="0.03"/><rect x="76" y="44" width="4" height="4" fill="#fff" fill-opacity="0.03"/><rect x="76" y="44" width="1" height="4" fill="#fff" fill-opacity="0.1"/><rect x="76" y="52" width="4" height="4" fill="#fff" fill-opacity="0.07"/><rect x="76" y="56" width="4" height="4" fill="#000" fill-opacity="0.02"/><rect x="76" y="60" width="4" height="4" fill="#fff" fill-opacity="0.03"/><rect x="76" y="64" width="4" height="4" fill="#fff" fill-opacity="0.03"/><rect x="76" y="64" width="1" height="4" fill="#fff" fill-opacity="0.1"/><rect x="76" y="68" width="4" height="4" fill="#000" fill-opacity="0.03"/><rect x="76" y="68" width="1" height="4" fill="#fff" fill-opacity="0.1"/><rect x="76" y="76" width="4" height="4" fill="#000" fill-opacity="0.09"/><rect x="76" y="108" width="4" height="4" fill="#fff" fill-opacity="0.05"/><rect x="76" y="120" width="4" height="4" fill="#fff" fill-opacity="0.05"/><rect x="76" y="124" width="4" height="4" fill="#000" fill-opacity="0.02"/><rect x="76" y="132" width="4" height="4" fill="#fff" fill-opacity="0.03"/><rect x="76" y="140" width="4" height="4" fill="#fff" fill-opacity="0.03"/><rect x="80" y="8" width="4" height="4" fill="#fff" fill-opacity="0.09"/><rect x="80" y="12" width="4" height="4" fill="#fff" fill-opacity="0.03"/><rect x="80" y="16" width="4" height="4" fill="#fff" fill-opacity="0.05"/><rect x="80" y="20" width="4" height="4" fill="#000" fill-opacity="0.03"/><rect x="80" y="28" width="4" height="4" fill="#000" fill-opacity="0.03"/><rect x="80" y="36" width="4" height="4" fill="#000" fill-opacity="0.05"/><rect x="80" y="36" width="1" height="4" fill="#fff" fill-opacity="0.1"/><rect x="80" y="44" width="4" height="4" fill="#fff" fill-opacity="0.06"/><rect x="80" y="48" width="4" height="4" fill="#fff" fill-opacity="0.09"/><rect x="80" y="48" width="1" height="4" fill="#fff" fill-opacity="0.1"/><rect x="80" y="52" width="4" height="4" fill="#fff" fill-opacity="0.08"/><rect x="80" y="52" width="1" height="4" fill="#fff" fill-opacity="0.1"/><rect x="80" y="56" width="4" height="4" fill="#fff" fill-opacity="0.04"/><rect x="80" y="80" width="4" height="4" fill="#000" fill-opacity="0.03"/><rect x="80" y="88" width="4" height="4" fill="#fff" fill-opacity="0.06"/><rect x="80" y="88" width="1" height="4" fill="#fff" fill-opacity="0.1"/><rect x="80" y="100" width="4" height="4" fill="#000" fill-opacity="0.04"/><rect x="80" y="104" width="4" height="4" fill="#000" fill-opacity="0.03"/><rect x="80" y="108" width="4" height="4" fill="#000" fill-opacity="0.04"/><rect x="80" y="116" width="4" height="4" fill="#fff" fill-opacity="0.04"/><rect x="80" y="120" width="4" height="4" fill="#fff" fill-opacity="0.03"/><rect x="80" y="124" width="4" height="4" fill="#fff" fill-opacity="0.03"/><rect x="80" y="128" width="4" height="4" fill="#fff" fill-opacity="0.04"/><rect x="80" y="132" width="4" height="4" fill="#fff" fill-opacity="0.04"/><rect x="80" y="136" width="4" height="4" fill="#fff" fill-opacity="0.09"/><rect x="80" y="144" width="4" height="4" fill="#fff" fill-opacity="0.04"/><rect x="84" y="0" width="4" height="4" fill="#000" fill-opacity="0.05"/><rect x="84" y="8" width="4" height="4" fill="#000" fill-opacity="0.03"/><rect x="84" y="12" width="4" height="4" fill="#000" fill-opacity="0.06"/><rect x="84" y="40" width="4" height="4" fill="#000" fill-opacity="0.07"/><rect x="84" y="44" width="4" height="4" fill="#fff" fill-opacity="0.05"/><rect x="84" y="60" width="4" height="4" fill="#fff" fill-opacity="0.08"/><rect x="84" y="68" width="4" height="4" fill="#fff" fill-opacity="0.03"/><rect x="84" y="72" width="4" height="4" fill="#000" fill-opacity="0.05"/><rect x="84" y="80" width="4" height="4" fill="#fff" fill-opacity="0.03"/><rect x="84" y="80" width="1" height="4" fill="#fff" fill-opacity="0.1"/><rect x="84" y="84" width="4" height="4" fill="#000" fill-opacity="0.03"/><rect x="84" y="88" width="4" height="4" fill="#000" fill-opacity="0.04"/><rect x="84" y="92" width="4" height="4" fill="#000" fill-opacity="0.03"/><rect x="84" y="100" width="4" height="4" fill="#000" fill-opacity="0.04"/><rect x="84" y="104" width="4" height="4" fill="#fff" fill-opacity="0.04"/><rect x="84" y="120" width="4" height="4" fill="#fff" fill-opacity="0.08"/><rect x="84" y="120" width="1" height="4" fill="#fff" fill-opacity="0.1"/><rect x="84" y="140" width="4" height="4" fill="#000" fill-opacity="0.04"/><rect x="88" y="0" width="4" height="4" fill="#000" fill-opacity="0.05"/><rect x="88" y="0" width="1" height="4" fill="#fff" fill-opacity="0.1"/><rect x="88" y="12" width="4" height="4" fill="#000" fill-opacity="0.07"/><rect x="88" y="16" width="4" height="4" fill="#fff" fill-opacity="0.03"/><rect x="88" y="20" width="4" height="4" fill="#000" fill-opacity="0.05"/><rect x="88" y="32" width="4" height="4" fill="#fff" fill-opacity="0.09"/><rect x="88" y="36" width="4" height="4" fill="#000" fill-opacity="0.08"/><rect x="88" y="36" width="1" height="4" fill="#fff" fill-opacity="0.1"/><rect x="88" y="64" width="4" height="4" fill="#000" fill-opacity="0.03"/><rect x="88" y="80" width="4" height="4" fill="#fff" fill-opacity="0.08"/><rect x="88" y="84" width="4" height="4" fill="#000" fill-opacity="0.02"/><rect x="88" y="88" width="4" height="4" fill="#000" fill-opacity="0.04"/><rect x="88" y="92" width="4" height="4" fill="#fff" fill-opacity="0.03"/><rect x="88" y="92" width="1" height="4" fill="#fff" fill-opacity="0.1"/><rect x="88" y="96" width="4" height="4" fill="#000" fill-opacity="0.07"/><rect x="88" y="104" width="4" height="4" fill="#fff" fill-opacity="0.04"/><rect x="88" y="108" width="4" height="4" fill="#000" fill-opacity="0.05"/><rect x="88" y="112" width="4" height="4" fill="#fff" fill-opacity="0.06"/><rect x="88" y="116" width="4" height="4" fill="#000" fill-opacity="0.04"/><rect x="88" y="120" width="4" height="4" fill="#000" fill-opacity="0.05"/><rect x="88" y="124" width="4" height="4" fill="#000" fill-opacity="0.07"/><rect x="88" y="132" width="4" height="4" fill="#fff" fill-opacity="0.03"/><rect x="88" y="136" width="4" height="4" fill="#000" fill-opacity="0.03"/><rect x="88" y="136" width="1" height="4" fill="#fff" fill-opacity="0.1"/><rect x="88" y="140" width="4" height="4" fill="#000" fill-opacity="0.06"/><rect x="92" y="0" width="4" height="4" fill="#000" fill-opacity="0.03"/><rect x="92" y="0" width="1" height="4" fill="#fff" fill-opacity="0.1"/><rect x="92" y="4" width="4" height="4" fill="#000" fill-opacity="0.03"/><rect x="92" y="4" width="1" height="4" fill="#fff" fill-opacity="0.1"/><rect x="92" y="20" width="4" height="4" fill="#fff" fill-opacity="0.02"/><rect x="92" y="20" width="1" height="4" fill="#fff" fill-opacity="0.1"/><rect x="92" y="24" width="4" height="4" fill="#fff" fill-opacity="0.03"/><rect x="92" y="24" width="1" height="4" fill="#fff" fill-opacity="0.1"/><rect x="92" y="28" width="4" height="4" fill="#000" fill-opacity="0.09"/><rect x="92" y="32" width="4" height="4" fill="#000" fill-opacity="0.03"/><rect x="92" y="52" width="4" height="4" fill="#fff" fill-opacity="0.05"/><rect x="92" y="60" width="4" height="4" fill="#000" fill-opacity="0.07"/><rect x="92" y="68" width="4" height="4" fill="#fff" fill-opacity="0.05"/><rect x="92" y="72" width="4" height="4" fill="#000" fill-opacity="0.03"/><rect x="92" y="72" width="1" height="4" fill="#fff" fill-opacity="0.1"/><rect x="92" y="76" width="4" height="4" fill="#000" fill-opacity="0.04"/><rect x="92" y="88" width="4" height="4" fill="#fff" fill-opacity="0.03"/><rect x="92" y="92" width="4" height="4" fill="#fff" fill-opacity="0.04"/><rect x="92" y="100" width="4" height="4" fill="#000" fill-opacity="0.03"/><rect x="92" y="100" width="1" height="4" fill="#fff" fill-opacity="0.1"/><rect x="92" y="104" width="4" height="4" fill="#000" fill-opacity="0.05"/><rect x="92" y="108" width="4" height="4" fill="#000" fill-opacity="0.03"/><rect x="92" y="120" width="4" height="4" fill="#000" fill-opacity="0.03"/><rect x="92" y="124" width="4" height="4" fill="#fff" fill-opacity="0.03"/><rect x="92" y="124" width="1" height="4" fill="#fff" fill-opacity="0.1"/><rect x="92" y="128" width="4" height="4" fill="#fff" fill-opacity="0.03"/><rect x="92" y="132" width="4" height="4" fill="#fff" fill-opacity="0.05"/><rect x="92" y="132" width="1" height="4" fill="#fff" fill-opacity="0.1"/><rect x="92" y="136" width="4" height="4" fill="#000" fill-opacity="0.03"/><rect x="92" y="140" width="4" height="4" fill="#000" fill-opacity="0.04"/><rect x="92" y="140" width="1" height="4" fill="#fff" fill-opacity="0.1"/><rect x="96" y="4" width="4" height="4" fill="#fff" fill-opacity="0.04"/><rect x="96" y="4" width="1" height="4" fill="#fff" fill-opacity="0.1"/><rect x="96" y="12" width="4" height="4" fill="#000" fill-opacity="0.03"/><rect x="96" y="16" width="4" height="4" fill="#fff" fill-opacity="0.03"/><rect x="96" y="32" width="4" height="4" fill="#000" fill-opacity="0.05"/><rect x="96" y="32" width="1" height="4" fill="#fff" fill-opacity="0.1"/><rect x="96" y="36" width="4" height="4" fill="#fff" fill-opacity="0.08"/><rect x="96" y="44" width="4" height="4" fill="#fff" fill-opacity="0.06"/><rect x="96" y="48" width="4" height="4" fill="#fff" fill-opacity="0.06"/><rect x="96" y="52" width="4" height="4" fill="#fff" fill-opacity="0.05"/><rect x="96" y="56" width="4" height="4" fill="#000" fill-opacity="0.08"/><rect x="96" y="56" width="1" height="4" fill="#fff" fill-opacity="0.1"/><rect x="96" y="68" width="4" height="4" fill="#fff" fill-opacity="0.03"/><rect x="96" y="76" width="4" height="4" fill="#000" fill-opacity="0.04"/><rect x="96" y="80" width="4" height="4" fill="#000" fill-opacity="0.08"/><rect x="96" y="88" width="4" height="4" fill="#000" fill-opacity="0.06"/><rect x="96" y="96" width="4" height="4" fill="#000" fill-opacity="0.03"/><rect x="96" y="96" width="1" height="4" fill="#fff" fill-opacity="0.1"/><rect x="96" y="104" width="4" height="4" fill="#000" fill-opacity="0.08"/><rect x="96" y="108" width="4" height="4" fill="#fff" fill-opacity="0.03"/><rect x="96" y="112" width="4" height="4" fill="#000" fill-opacity="0.04"/><rect x="96" y="112" width="1" height="4" fill="#fff" fill-opacity="0.1"/><rect x="96" y="116" width="4" height="4" fill="#000" fill-opacity="0.03"/><rect x="96" y="128" width="4" height="4" fill="#fff" fill-opacity="0.05"/><rect x="96" y="132" width="4" height="4" fill="#fff" fill-opacity="0.04"/><rect x="96" y="132" width="1" height="4" fill="#fff" fill-opacity="0.1"/><rect x="96" y="136" width="4" height="4" fill="#fff" fill-opacity="0.05"/><rect x="96" y="140" width="4" height="4" fill="#fff" fill-opacity="0.03"/><rect x="96" y="144" width="4" height="4" fill="#fff" fill-opacity="0.04"/><rect x="96" y="144" width="1" height="4" fill="#fff" fill-opacity="0.1"/><rect x="100" y="4" width="4" height="4" fill="#000" fill-opacity="0.03"/><rect x="100" y="8" width="4" height="4" fill="#fff" fill-opacity="0.05"/><rect x="100" y="12" width="4" height="4" fill="#fff" fill-opacity="0.03"/><rect x="100" y="16" width="4" height="4" fill="#000" fill-opacity="0.05"/><rect x="100" y="16" width="1" height="4" fill="#fff" fill-opacity="0.1"/><rect x="100" y="20" width="4" height="4" fill="#000" fill-opacity="0.03"/><rect x="100" y="28" width="4" height="4" fill="#fff" fill-opacity="0.06"/><rect x="100" y="32" width="4" height="4" fill="#fff" fill-opacity="0.05"/><rect x="100" y="36" width="4" height="4" fill="#fff" fill-opacity="0.09"/><rect x="100" y="40" width="4" height="4" fill="#000" fill-opacity="0.03"/><rect x="100" y="56" width="4" height="4" fill="#000" fill-opacity="0.06"/><rect x="100" y="64" width="4" height="4" fill="#fff" fill-opacity="0.02"/><rect x="100" y="68" width="4" height="4" fill="#fff" fill-opacity="0.04"/><rect x="100" y="76" width="4" height="4" fill="#000" fill-opacity="0.03"/><rect x="100" y="80" width="4" height="4" fill="#000" fill-opacity="0.03"/><rect x="100" y="92" width="4" height="4" fill="#fff" fill-opacity="0.02"/><rect x="100" y="96" width="4" height="4" fill="#000" fill-opacity="0.05"/><rect x="100" y="100" width="4" height="4" fill="#000" fill-opacity="0.04"/><rect x="100" y="112" width="4" height="4" fill="#000" fill-opacity="0.03"/><rect x="100" y="132" width="4" height="4" fill="#000" fill-opacity="0.03"/><rect x="100" y="140" width="4" height="4" fill="#fff" fill-opacity="0.03"/><rect x="104" y="4" width="4" height="4" fill="#000" fill-opacity="0.03"/><rect x="104" y="16" width="4" height="4" fill="#fff" fill-opacity="0.04"/><rect x="104" y="20" width="4" height="4" fill="#fff" fill-opacity="0.09"/><rect x="104" y="32" width="4" height="4" fill="#fff" fill-opacity="0.07"/><rect x="104" y="40" width="4" height="4" fill="#fff" fill-opacity="0.04"/><rect x="104" y="44" width="4" height="4" fill="#000" fill-opacity="0.06"/><rect x="104" y="44" width="1" height="4" fill="#fff" fill-opacity="0.1"/><rect x="104" y="56" width="4" height="4" fill="#fff" fill-opacity="0.03"/><rect x="104" y="60" width="4" height="4" fill="#fff" fill-opacity="0.06"/><rect x="104" y="60" width="1" height="4" fill="#fff" fill-opacity="0.1"/><rect x="104" y="64" width="4" height="4" fill="#000" fill-opacity="0.03"/><rect x="104" y="68" width="4" height="4" fill="#fff" fill-opacity="0.07"/><rect x="104" y="76" width="4" height="4" fill="#000" fill-opacity="0.09"/><rect x="104" y="80" width="4" height="4" fill="#000" fill-opacity="0.04"/><rect x="104" y="84" width="4" height="4" fill="#fff" fill-opacity="0.03"/><rect x="104" y="84" width="1" height="4" fill="#fff" fill-opacity="0.1"/><rect x="104" y="92" width="4" height="4" fill="#fff" fill-opacity="0.04"/><rect x="104" y="92" width="1" height="4" fill="#fff" fill-opacity="0.1"/><rect x="104" y="96" width="4" height="4" fill="#fff" fill-opacity="0.03"/><rect x="104" y="104" width="4" height="4" fill="#fff" fill-opacity="0.04"/><rect x="104" y="116" width="4" height="4" fill="#000" fill-opacity="0.05"/><rect x="104" y="120" width="4" height="4" fill="#000" fill-opacity="0.03"/><rect x="104" y="128" width="4" height="4" fill="#fff" fill-opacity="0.04"/><rect x="104" y="132" width="4" height="4" fill="#000" fill-opacity="0.06"/><rect x="104" y="132" width="1" height="4" fill="#fff" fill-opacity="0.1"/><rect x="104" y="136" width="4" height="4" fill="#fff" fill-opacity="0.05"/><rect x="104" y="144" width="4" height="4" fill="#fff" fill-opacity="0.03"/><rect x="108" y="8" width="4" height="4" fill="#fff" fill-opacity="0.06"/><rect x="108" y="16" width="4" height="4" fill="#fff" fill-opacity="0.06"/><rect x="108" y="28" width="4" height="4" fill="#000" fill-opacity="0.05"/><rect x="108" y="32" width="4" height="4" fill="#000" fill-opacity="0.03"/><rect x="108" y="36" width="4" height="4" fill="#fff" fill-opacity="0.04"/><rect x="108" y="40" width="4" height="4" fill="#000" fill-opacity="0.04"/><rect x="108" y="40" width="1" height="4" fill="#fff" fill-opacity="0.1"/><rect x="108" y="48" width="4" height="4" fill="#fff" fill-opacity="0.04"/><rect x="108" y="52" width="4" height="4" fill="#fff" fill-opacity="0.05"/><rect x="108" y="56" width="4" height="4" fill="#fff" fill-opacity="0.04"/><rect x="108" y="60" width="4" height="4" fill="#000" fill-opacity="0.08"/><rect x="108" y="68" width="4" height="4" fill="#000" fill-opacity="0.05"/><rect x="108" y="80" width="4" height="4" fill="#fff" fill-opacity="0.03"/><rect x="108" y="84" width="4" height="4" fill="#000" fill-opacity="0.05"/><rect x="108" y="84" width="1" height="4" fill="#fff" fill-opacity="0.1"/><rect x="108" y="88" width="4" height="4" fill="#000" fill-opacity="0.03"/><rect x="108" y="92" width="4" height="4" fill="#000" fill-opacity="0.02"/><rect x="108" y="92" width="1" height="4" fill="#fff" fill-opacity="0.1"/><rect x="108" y="108" width="4" height="4" fill="#000" fill-opacity="0.03"/><rect x="108" y="108" width="1" height="4" fill="#fff" fill-opacity="0.1"/><rect x="108" y="124" width="4" height="4" fill="#000" fill-opacity="0.07"/><rect x="108" y="124" width="1" height="4" fill="#fff" fill-opacity="0.1"/><rect x="108" y="128" width="4" height="4" fill="#fff" fill-opacity="0.05"/><rect x="108" y="136" width="4" height="4" fill="#000" fill-opacity="0.05"/><rect x="108" y="136" width="1" height="4" fill="#fff" fill-opacity="0.1"/><rect x="108" y="144" width="4" height="4" fill="#fff" fill-opacity="0.03"/><rect x="112" y="0" width="4" height="4" fill="#000" fill-opacity="0.03"/><rect x="112" y="16" width="4" height="4" fill="#000" fill-opacity="0.03"/><rect x="112" y="20" width="4" height="4" fill="#000" fill-opacity="0.06"/><rect x="112" y="28" width="4" height="4" fill="#000" fill-opacity="0.09"/><rect x="112" y="32" width="4" height="4" fill="#fff" fill-opacity="0.05"/><rect x="112" y="40" width="4" height="4" fill="#000" fill-opacity="0.03"/><rect x="112" y="44" width="4" height="4" fill="#fff" fill-opacity="0.05"/><rect x="112" y="48" width="4" height="4" fill="#000" fill-opacity="0.04"/><rect x="112" y="52" width="4" height="4" fill="#000" fill-opacity="0.04"/><rect x="112" y="60" width="4" height="4" fill="#000" fill-opacity="0.06"/><rect x="112" y="64" width="4" height="4" fill="#000" fill-opacity="0.04"/><rect x="112" y="64" width="1" height="4" fill="#fff" fill-opacity="0.1"/><rect x="112" y="68" width="4" height="4" fill="#000" fill-opacity="0.04"/><rect x="112" y="76" width="4" height="4" fill="#fff" fill-opacity="0.05"/><rect x="112" y="84" width="4" height="4" fill="#000" fill-opacity="0.07"/><rect x="112" y="88" width="4" height="4" fill="#fff" fill-opacity="0.04"/><rect x="112" y="96" width="4" height="4" fill="#fff" fill-opacity="0.04"/><rect x="112" y="116" width="4" height="4" fill="#000" fill-opacity="0.06"/><rect x="112" y="124" width="4" height="4" fill="#000" fill-opacity="0.08"/><rect x="112" y="124" width="1" height="4" fill="#fff" fill-opacity="0.1"/><rect x="112" y="128" width="4" height="4" fill="#000" fill-opacity="0.06"/><rect x="112" y="136" width="4" height="4" fill="#fff" fill-opacity="0.07"/><rect x="112" y="144" width="4" height="4" fill="#fff" fill-opacity="0.04"/><rect x="116" y="4" width="4" height="4" fill="#fff" fill-opacity="0.06"/><rect x="116" y="16" width="4" height="4" fill="#000" fill-opacity="0.05"/><rect x="116" y="20" width="4" height="4" fill="#000" fill-opacity="0.05"/><rect x="116" y="24" width="4" height="4" fill="#000" fill-opacity="0.06"/><rect x="116" y="28" width="4" height="4" fill="#000" fill-opacity="0.05"/><rect x="116" y="44" width="4" height="4" fill="#fff" fill-opacity="0.03"/><rect x="116" y="52" width="4" height="4" fill="#fff" fill-opacity="0.03"/><rect x="116" y="64" width="4" height="4" fill="#fff" fill-opacity="0.03"/><rect x="116" y="72" width="4" height="4" fill="#fff" fill-opacity="0.06"/><rect x="116" y="76" width="4" height="4" fill="#fff" fill-opacity="0.04"/><rect x="116" y="80" width="4" height="4" fill="#000" fill-opacity="0.03"/><rect x="116" y="100" width="4" height="4" fill="#000" fill-opacity="0.03"/><rect x="116" y="104" width="4" height="4" fill="#fff" fill-opacity="0.06"/><rect x="116" y="112" width="4" height="4" fill="#fff" fill-opacity="0.03"/><rect x="116" y="124" width="4" height="4" fill="#000" fill-opacity="0.03"/><rect x="116" y="124" width="1" height="4" fill="#fff" fill-opacity="0.1"/><rect x="116" y="140" width="4" height="4" fill="#000" fill-opacity="0.06"/><rect x="116" y="144" width="4" height="4" fill="#fff" fill-opacity="0.03"/><rect x="120" y="0" width="4" height="4" fill="#000" fill-opacity="0.04"/><rect x="120" y="0" width="1" height="4" fill="#fff" fill-opacity="0.1"/><rect x="120" y="4" width="4" height="4" fill="#fff" fill-opacity="0.09"/><rect x="120" y="20" width="4" height="4" fill="#fff" fill-opacity="0.09"/><rect x="120" y="28" width="4" height="4" fill="#000" fill-opacity="0.07"/><rect x="120" y="28" width="1" height="4" fill="#fff" fill-opacity="0.1"/><rect x="120" y="36" width="4" height="4" fill="#fff" fill-opacity="0.04"/><rect x="120" y="48" width="4" height="4" fill="#fff" fill-opacity="0.05"/><rect x="120" y="56" width="4" height="4" fill="#fff" fill-opacity="0.04"/><rect x="120" y="64" width="4" height="4" fill="#000" fill-opacity="0.03"/><rect x="120" y="72" width="4" height="4" fill="#000" fill-opacity="0.03"/><rect x="120" y="84" width="4" height="4" fill="#fff" fill-opacity="0.04"/><rect x="120" y="84" width="1" height="4" fill="#fff" fill-opacity="0.1"/><rect x="120" y="92" width="4" height="4" fill="#fff" fill-opacity="0.09"/><rect x="120" y="96" width="4" height="4" fill="#000" fill-opacity="0.06"/><rect x="120" y="104" width="4" height="4" fill="#000" fill-opacity="0.04"/><rect x="120" y="104" width="1" height="4" fill="#fff" fill-opacity="0.1"/><rect x="120" y="132" width="4" height="4" fill="#000" fill-opacity="0.03"/><rect x="120" y="140" width="4" height="4" fill="#fff" fill-opacity="0.04"/><rect x="120" y="144" width="4" height="4" fill="#fff" fill-opacity="0.03"/><rect x="120" y="144" width="1" height="4" fill="#fff" fill-opacity="0.1"/><rect x="124" y="0" width="4" height="4" fill="#000" fill-opacity="0.04"/><rect x="124" y="0" width="1" height="4" fill="#fff" fill-opacity="0.1"/><rect x="124" y="4" width="4" height="4" fill="#fff" fill-opacity="0.04"/><rect x="124" y="8" width="4" height="4" fill="#000" fill-opacity="0.03"/><rect x="124" y="12" width="4" height="4" fill="#fff" fill-opacity="0.08"/><rect x="124" y="28" width="4" height="4" fill="#000" fill-opacity="0.07"/><rect x="124" y="32" width="4" height="4" fill="#fff" fill-opacity="0.03"/><rect x="124" y="44" width="4" height="4" fill="#000" fill-opacity="0.03"/><rect x="124" y="52" width="4" height="4" fill="#fff" fill-opacity="0.07"/><rect x="124" y="56" width="4" height="4" fill="#000" fill-opacity="0.05"/><rect x="124" y="60" width="4" height="4" fill="#fff" fill-opacity="0.06"/><rect x="124" y="64" width="4" height="4" fill="#fff" fill-opacity="0.07"/><rect x="124" y="68" width="4" height="4" fill="#fff" fill-opacity="0.03"/><rect x="124" y="76" width="4" height="4" fill="#000" fill-opacity="0.04"/><rect x="124" y="80" width="4" height="4" fill="#fff" fill-opacity="0.08"/><rect x="124" y="96" width="4" height="4" fill="#fff" fill-opacity="0.06"/><rect x="124" y="112" width="4" height="4" fill="#fff" fill-opacity="0.03"/><rect x="124" y="112" width="1" height="4" fill="#fff" fill-opacity="0.1"/><rect x="124" y="120" width="4" height="4" fill="#fff" fill-opacity="0.05"/><rect x="124" y="128" width="4" height="4" fill="#fff" fill-opacity="0.04"/><rect x="124" y="132" width="4" height="4" fill="#000" fill-opacity="0.05"/><rect x="124" y="136" width="4" height="4" fill="#000" fill-opacity="0.04"/><rect x="124" y="136" width="1" height="4" fill="#fff" fill-opacity="0.1"/><rect x="128" y="4" width="4" height="4" fill="#fff" fill-opacity="0.06"/><rect x="128" y="8" width="4" height="4" fill="#000" fill-opacity="0.03"/><rect x="128" y="12" width="4" height="4" fill="#000" fill-opacity="0.03"/><rect x="128" y="20" width="4" height="4" fill="#fff" fill-opacity="0.03"/><rect x="128" y="20" width="1" height="4" fill="#fff" fill-opacity="0.1"/><rect x="128" y="24" width="4" height="4" fill="#fff" fill-opacity="0.09"/><rect x="128" y="36" width="4" height="4" fill="#fff" fill-opacity="0.03"/><rect x="128" y="44" width="4" height="4" fill="#000" fill-opacity="0.05"/><rect x="128" y="44" width="1" height="4" fill="#fff" fill-opacity="0.1"/><rect x="128" y="48" width="4" height="4" fill="#fff" fill-opacity="0.07"/><rect x="128" y="48" width="1" height="4" fill="#fff" fill-opacity="0.1"/><rect x="128" y="52" width="4" height="4" fill="#000" fill-opacity="0.06"/><rect x="128" y="60" width="4" height="4" fill="#fff" fill-opacity="0.06"/><rect x="128" y="68" width="4" height="4" fill="#fff" fill-opacity="0.03"/><rect x="128" y="72" width="4" height="4" fill="#000" fill-opacity="0.05"/><rect x="128" y="80" width="4" height="4" fill="#000" fill-opacity="0.09"/><rect x="128" y="92" width="4" height="4" fill="#000" fill-opacity="0.09"/><rect x="128" y="96" width="4" height="4" fill="#000" fill-opacity="0.06"/><rect x="128" y="100" width="4" height="4" fill="#000" fill-opacity="0.04"/><rect x="128" y="100" width="1" height="4" fill="#fff" fill-opacity="0.1"/><rect x="128" y="112" width="4" height="4" fill="#fff" fill-opacity="0.06"/><rect x="128" y="128" width="4" height="4" fill="#fff" fill-opacity="0.06"/><rect x="128" y="136" width="4" height="4" fill="#000" fill-opacity="0.06"/><rect x="132" y="0" width="4" height="4" fill="#000" fill-opacity="0.03"/><rect x="132" y="8" width="4" height="4" fill="#fff" fill-opacity="0.05"/><rect x="132" y="16" width="4" height="4" fill="#fff" fill-opacity="0.08"/><rect x="132" y="32" width="4" height="4" fill="#000" fill-opacity="0.03"/><rect x="132" y="40" width="4" height="4" fill="#000" fill-opacity="0.04"/><rect x="132" y="44" width="4" height="4" fill="#000" fill-opacity="0.05"/><rect x="132" y="48" width="4" height="4" fill="#fff" fill-opacity="0.09"/><rect x="132" y="52" width="4" height="4" fill="#000" fill-opacity="0.05"/><rect x="132" y="68" width="4" height="4" fill="#000" fill-opacity="0.05"/><rect x="132" y="72" width="4" height="4" fill="#000" fill-opacity="0.03"/><rect x="132" y="76" width="4" height="4" fill="#fff" fill-opacity="0.07"/><rect x="132" y="80" width="4" height="4" fill="#000" fill-opacity="0.09"/><rect x="132" y="84" width="4" height="4" fill="#000" fill-opacity="0.04"/><rect x="132" y="100" width="4" height="4" fill="#fff" fill-opacity="0.05"/><rect x="132" y="108" width="4" height="4" fill="#000" fill-opacity="0.05"/><rect x="132" y="128" width="4" height="4" fill="#000" fill-opacity="0.04"/><rect x="132" y="128" width="1" height="4" fill="#fff" fill-opacity="0.1"/><rect x="132" y="132" width="4" height="4" fill="#fff" fill-opacity="0.03"/><rect x="132" y="136" width="4" height="4" fill="#000" fill-opacity="0.06"/><rect x="132" y="140" width="4" height="4" fill="#fff" fill-opacity="0.05"/><rect x="132" y="144" width="4" height="4" fill="#fff" fill-opacity="0.05"/><rect x="136" y="4" width="4" height="4" fill="#000" fill-opacity="0.03"/><rect x="136" y="4" width="1" height="4" fill="#fff" fill-opacity="0.1"/><rect x="136" y="8" width="4" height="4" fill="#000" fill-opacity="0.06"/><rect x="136" y="12" width="4" height="4" fill="#000" fill-opacity="0.04"/><rect x="136" y="20" width="4" height="4" fill="#fff" fill-opacity="0.06"/><rect x="136" y="24" width="4" height="4" fill="#000" fill-opacity="0.03"/><rect x="136" y="32" width="4" height="4" fill="#000" fill-opacity="0.05"/><rect x="136" y="40" width="4" height="4" fill="#000" fill-opacity="0.04"/><rect x="136" y="44" width="4" height="4" fill="#000" fill-opacity="0.03"/><rect x="136" y="48" width="4" height="4" fill="#000" fill-opacity="0.03"/><rect x="136" y="68" width="4" height="4" fill="#fff" fill-opacity="0.03"/><rect x="136" y="72" width="4" height="4" fill="#000" fill-opacity="0.03"/><rect x="136" y="76" width="4" height="4" fill="#000" fill-opacity="0.04"/><rect x="136" y="80" width="4" height="4" fill="#000" fill-opacity="0.04"/><rect x="136" y="84" width="4" height="4" fill="#fff" fill-opacity="0.05"/><rect x="136" y="96" width="4" height="4" fill="#000" fill-opacity="0.08"/><rect x="136" y="104" width="4" height="4" fill="#fff" fill-opacity="0.03"/><rect x="136" y="108" width="4" height="4" fill="#fff" fill-opacity="0.07"/><rect x="136" y="112" width="4" height="4" fill="#000" fill-opacity="0.03"/><rect x="136" y="116" width="4" height="4" fill="#fff" fill-opacity="0.05"/><rect x="136" y="124" width="4" height="4" fill="#fff" fill-opacity="0.03"/><rect x="136" y="124" width="1" height="4" fill="#fff" fill-opacity="0.1"/><rect x="136" y="144" width="4" height="4" fill="#fff" fill-opacity="0.04"/><rect x="140" y="0" width="4" height="4" fill="#fff" fill-opacity="0.09"/><rect x="140" y="8" width="4" height="4" fill="#fff" fill-opacity="0.02"/><rect x="140" y="12" width="4" height="4" fill="#fff" fill-opacity="0.03"/><rect x="140" y="20" width="4" height="4" fill="#fff" fill-opacity="0.04"/><rect x="140" y="24" width="4" height="4" fill="#000" fill-opacity="0.04"/><rect x="140" y="28" width="4" height="4" fill="#fff" fill-opacity="0.04"/><rect x="140" y="32" width="4" height="4" fill="#000" fill-opacity="0.03"/><rect x="140" y="36" width="4" height="4" fill="#fff" fill-opacity="0.05"/><rect x="140" y="36" width="1" height="4" fill="#fff" fill-opacity="0.1"/><rect x="140" y="48" width="4" height="4" fill="#fff" fill-opacity="0.05"/><rect x="140" y="48" width="1" height="4" fill="#fff" fill-opacity="0.1"/><rect x="140" y="52" width="4" height="4" fill="#fff" fill-opacity="0.04"/><rect x="140" y="68" width="4" height="4" fill="#000" fill-opacity="0.06"/><rect x="140" y="76" width="4" height="4" fill="#000" fill-opacity="0.04"/><rect x="140" y="80" width="4" height="4" fill="#000" fill-opacity="0.02"/><rect x="140" y="84" width="4" height="4" fill="#000" fill-opacity="0.03"/><rect x="140" y="88" width="4" height="4" fill="#000" fill-opacity="0.04"/><rect x="140" y="88" width="1" height="4" fill="#fff" fill-opacity="0.1"/><rect x="140" y="92" width="4" height="4" fill="#fff" fill-opacity="0.06"/><rect x="140" y="96" width="4" height="4" fill="#fff" fill-opacity="0.05"/><rect x="140" y="96" width="1" height="4" fill="#fff" fill-opacity="0.1"/><rect x="140" y="100" width="4" height="4" fill="#fff" fill-opacity="0.04"/><rect x="140" y="104" width="4" height="4" fill="#000" fill-opacity="0.03"/><rect x="140" y="120" width="4" height="4" fill="#000" fill-opacity="0.06"/><rect x="140" y="128" width="4" height="4" fill="#fff" fill-opacity="0.04"/><rect x="140" y="132" width="4" height="4" fill="#000" fill-opacity="0.03"/><rect x="140" y="140" width="4" height="4" fill="#fff" fill-opacity="0.02"/><rect x="140" y="140" width="1" height="4" fill="#fff" fill-opacity="0.1"/><rect x="144" y="4" width="4" height="4" fill="#000" fill-opacity="0.04"/><rect x="144" y="12" width="4" height="4" fill="#000" fill-opacity="0.03"/><rect x="144" y="20" width="4" height="4" fill="#fff" fill-opacity="0.03"/><rect x="144" y="24" width="4" height="4" fill="#000" fill-opacity="0.08"/><rect x="144" y="24" width="1" height="4" fill="#fff" fill-opacity="0.1"/><rect x="144" y="28" width="4" height="4" fill="#fff" fill-opacity="0.04"/><rect x="144" y="36" width="4" height="4" fill="#fff" fill-opacity="0.04"/><rect x="144" y="36" width="1" height="4" fill="#fff" fill-opacity="0.1"/><rect x="144" y="40" width="4" height="4" fill="#000" fill-opacity="0.05"/><rect x="144" y="44" width="4" height="4" fill="#fff" fill-opacity="0.09"/><rect x="144" y="48" width="4" height="4" fill="#fff" fill-opacity="0.06"/><rect x="144" y="48" width="1" height="4" fill="#fff" fill-opacity="0.1"/><rect x="144" y="68" width="4" height="4" fill="#fff" fill-opacity="0.04"/><rect x="144" y="68" width="1" height="4" fill="#fff" fill-opacity="0.1"/><rect x="144" y="76" width="4" height="4" fill="#000" fill-opacity="0.04"/><rect x="144" y="88" width="4" height="4" fill="#fff" fill-opacity="0.03"/><rect x="144" y="88" width="1" height="4" fill="#fff" fill-opacity="0.1"/><rect x="144" y="92" width="4" height="4" fill="#fff" fill-opacity="0.03"/><rect x="144" y="100" width="4" height="4" fill="#fff" fill-opacity="0.07"/><rect x="144" y="104" width="4" height="4" fill="#fff" fill-opacity="0.06"/><rect x="144" y="108" width="4" height="4" fill="#000" fill-opacity="0.08"/><rect x="144" y="112" width="4" height="4" fill="#fff" fill-opacity="0.04"/><rect x="144" y="120" width="4" height="4" fill="#000" fill-opacity="0.05"/><rect x="144" y="132" width="4" height="4" fill="#000" fill-opacity="0.04"/><rect x="144" y="140" width="4" height="4" fill="#000" fill-opacity="0.04"/><rect x="144" y="140" width="1" height="4" fill="#fff" fill-opacity="0.1"/></pattern><pattern id="bk2" width="116" height="116" patternUnits="userSpaceOnUse" patternTransform="translate(2 2)"><rect x="0" y="0" width="4" height="4" fill="#fff" fill-opacity="0.04"/><rect x="0" y="12" width="4" height="4" fill="#000" fill-opacity="0.08"/><rect x="0" y="24" width="4" height="4" fill="#000" fill-opacity="0.06"/><rect x="0" y="28" width="4" height="4" fill="#fff" fill-opacity="0.07"/><rect x="0" y="36" width="4" height="4" fill="#000" fill-opacity="0.09"/><rect x="0" y="44" width="4" height="4" fill="#000" fill-opacity="0.03"/><rect x="0" y="52" width="4" height="4" fill="#000" fill-opacity="0.09"/><rect x="0" y="60" width="4" height="4" fill="#fff" fill-opacity="0.09"/><rect x="0" y="60" width="1" height="4" fill="#fff" fill-opacity="0.1"/><rect x="0" y="68" width="4" height="4" fill="#fff" fill-opacity="0.03"/><rect x="0" y="76" width="4" height="4" fill="#000" fill-opacity="0.03"/><rect x="0" y="76" width="1" height="4" fill="#fff" fill-opacity="0.1"/><rect x="0" y="92" width="4" height="4" fill="#fff" fill-opacity="0.04"/><rect x="0" y="92" width="1" height="4" fill="#fff" fill-opacity="0.1"/><rect x="0" y="96" width="4" height="4" fill="#fff" fill-opacity="0.05"/><rect x="0" y="96" width="1" height="4" fill="#fff" fill-opacity="0.1"/><rect x="0" y="108" width="4" height="4" fill="#fff" fill-opacity="0.03"/><rect x="0" y="112" width="4" height="4" fill="#000" fill-opacity="0.05"/><rect x="4" y="4" width="4" height="4" fill="#000" fill-opacity="0.03"/><rect x="4" y="8" width="4" height="4" fill="#000" fill-opacity="0.03"/><rect x="4" y="12" width="4" height="4" fill="#fff" fill-opacity="0.03"/><rect x="4" y="20" width="4" height="4" fill="#000" fill-opacity="0.05"/><rect x="4" y="20" width="1" height="4" fill="#fff" fill-opacity="0.1"/><rect x="4" y="28" width="4" height="4" fill="#fff" fill-opacity="0.05"/><rect x="4" y="36" width="4" height="4" fill="#fff" fill-opacity="0.03"/><rect x="4" y="40" width="4" height="4" fill="#000" fill-opacity="0.04"/><rect x="4" y="48" width="4" height="4" fill="#000" fill-opacity="0.03"/><rect x="4" y="72" width="4" height="4" fill="#000" fill-opacity="0.04"/><rect x="4" y="76" width="4" height="4" fill="#000" fill-opacity="0.07"/><rect x="4" y="80" width="4" height="4" fill="#000" fill-opacity="0.04"/><rect x="4" y="84" width="4" height="4" fill="#fff" fill-opacity="0.03"/><rect x="4" y="84" width="1" height="4" fill="#fff" fill-opacity="0.1"/><rect x="4" y="88" width="4" height="4" fill="#000" fill-opacity="0.05"/><rect x="4" y="88" width="1" height="4" fill="#fff" fill-opacity="0.1"/><rect x="4" y="96" width="4" height="4" fill="#000" fill-opacity="0.07"/><rect x="4" y="100" width="4" height="4" fill="#fff" fill-opacity="0.03"/><rect x="4" y="108" width="4" height="4" fill="#fff" fill-opacity="0.06"/><rect x="8" y="0" width="4" height="4" fill="#fff" fill-opacity="0.04"/><rect x="8" y="4" width="4" height="4" fill="#000" fill-opacity="0.06"/><rect x="8" y="8" width="4" height="4" fill="#000" fill-opacity="0.06"/><rect x="8" y="12" width="4" height="4" fill="#000" fill-opacity="0.05"/><rect x="8" y="24" width="4" height="4" fill="#fff" fill-opacity="0.09"/><rect x="8" y="24" width="1" height="4" fill="#fff" fill-opacity="0.1"/><rect x="8" y="32" width="4" height="4" fill="#000" fill-opacity="0.03"/><rect x="8" y="36" width="4" height="4" fill="#000" fill-opacity="0.03"/><rect x="8" y="36" width="1" height="4" fill="#fff" fill-opacity="0.1"/><rect x="8" y="52" width="4" height="4" fill="#fff" fill-opacity="0.04"/><rect x="8" y="56" width="4" height="4" fill="#fff" fill-opacity="0.05"/><rect x="8" y="56" width="1" height="4" fill="#fff" fill-opacity="0.1"/><rect x="8" y="64" width="4" height="4" fill="#000" fill-opacity="0.09"/><rect x="8" y="72" width="4" height="4" fill="#000" fill-opacity="0.04"/><rect x="8" y="76" width="4" height="4" fill="#000" fill-opacity="0.07"/><rect x="8" y="80" width="4" height="4" fill="#000" fill-opacity="0.05"/><rect x="8" y="80" width="1" height="4" fill="#fff" fill-opacity="0.1"/><rect x="8" y="84" width="4" height="4" fill="#000" fill-opacity="0.06"/><rect x="8" y="84" width="1" height="4" fill="#fff" fill-opacity="0.1"/><rect x="8" y="92" width="4" height="4" fill="#fff" fill-opacity="0.09"/><rect x="8" y="96" width="4" height="4" fill="#fff" fill-opacity="0.06"/><rect x="8" y="100" width="4" height="4" fill="#fff" fill-opacity="0.06"/><rect x="8" y="104" width="4" height="4" fill="#fff" fill-opacity="0.02"/><rect x="8" y="112" width="4" height="4" fill="#000" fill-opacity="0.04"/><rect x="12" y="0" width="4" height="4" fill="#fff" fill-opacity="0.04"/><rect x="12" y="0" width="1" height="4" fill="#fff" fill-opacity="0.1"/><rect x="12" y="8" width="4" height="4" fill="#fff" fill-opacity="0.06"/><rect x="12" y="12" width="4" height="4" fill="#fff" fill-opacity="0.08"/><rect x="12" y="28" width="4" height="4" fill="#000" fill-opacity="0.04"/><rect x="12" y="36" width="4" height="4" fill="#fff" fill-opacity="0.07"/><rect x="12" y="44" width="4" height="4" fill="#000" fill-opacity="0.04"/><rect x="12" y="48" width="4" height="4" fill="#000" fill-opacity="0.04"/><rect x="12" y="52" width="4" height="4" fill="#fff" fill-opacity="0.03"/><rect x="12" y="56" width="4" height="4" fill="#fff" fill-opacity="0.07"/><rect x="12" y="56" width="1" height="4" fill="#fff" fill-opacity="0.1"/><rect x="12" y="64" width="4" height="4" fill="#000" fill-opacity="0.04"/><rect x="12" y="68" width="4" height="4" fill="#000" fill-opacity="0.07"/><rect x="12" y="80" width="4" height="4" fill="#000" fill-opacity="0.03"/><rect x="12" y="84" width="4" height="4" fill="#000" fill-opacity="0.03"/><rect x="12" y="88" width="4" height="4" fill="#fff" fill-opacity="0.04"/><rect x="12" y="92" width="4" height="4" fill="#000" fill-opacity="0.04"/><rect x="12" y="100" width="4" height="4" fill="#000" fill-opacity="0.04"/><rect x="12" y="100" width="1" height="4" fill="#fff" fill-opacity="0.1"/><rect x="12" y="108" width="4" height="4" fill="#000" fill-opacity="0.05"/><rect x="12" y="112" width="4" height="4" fill="#fff" fill-opacity="0.04"/><rect x="16" y="0" width="4" height="4" fill="#000" fill-opacity="0.03"/><rect x="16" y="8" width="4" height="4" fill="#fff" fill-opacity="0.04"/><rect x="16" y="16" width="4" height="4" fill="#fff" fill-opacity="0.05"/><rect x="16" y="24" width="4" height="4" fill="#000" fill-opacity="0.03"/><rect x="16" y="28" width="4" height="4" fill="#000" fill-opacity="0.03"/><rect x="16" y="32" width="4" height="4" fill="#000" fill-opacity="0.03"/><rect x="16" y="40" width="4" height="4" fill="#000" fill-opacity="0.04"/><rect x="16" y="60" width="4" height="4" fill="#fff" fill-opacity="0.09"/><rect x="16" y="64" width="4" height="4" fill="#000" fill-opacity="0.09"/><rect x="16" y="68" width="4" height="4" fill="#fff" fill-opacity="0.06"/><rect x="16" y="72" width="4" height="4" fill="#000" fill-opacity="0.05"/><rect x="16" y="88" width="4" height="4" fill="#fff" fill-opacity="0.04"/><rect x="16" y="88" width="1" height="4" fill="#fff" fill-opacity="0.1"/><rect x="16" y="92" width="4" height="4" fill="#fff" fill-opacity="0.03"/><rect x="16" y="96" width="4" height="4" fill="#fff" fill-opacity="0.04"/><rect x="16" y="100" width="4" height="4" fill="#fff" fill-opacity="0.06"/><rect x="16" y="112" width="4" height="4" fill="#000" fill-opacity="0.04"/><rect x="20" y="0" width="4" height="4" fill="#000" fill-opacity="0.05"/><rect x="20" y="4" width="4" height="4" fill="#fff" fill-opacity="0.03"/><rect x="20" y="12" width="4" height="4" fill="#000" fill-opacity="0.04"/><rect x="20" y="12" width="1" height="4" fill="#fff" fill-opacity="0.1"/><rect x="20" y="16" width="4" height="4" fill="#000" fill-opacity="0.07"/><rect x="20" y="16" width="1" height="4" fill="#fff" fill-opacity="0.1"/><rect x="20" y="20" width="4" height="4" fill="#fff" fill-opacity="0.07"/><rect x="20" y="28" width="4" height="4" fill="#fff" fill-opacity="0.04"/><rect x="20" y="40" width="4" height="4" fill="#fff" fill-opacity="0.04"/><rect x="20" y="48" width="4" height="4" fill="#000" fill-opacity="0.06"/><rect x="20" y="56" width="4" height="4" fill="#000" fill-opacity="0.03"/><rect x="20" y="56" width="1" height="4" fill="#fff" fill-opacity="0.1"/><rect x="20" y="60" width="4" height="4" fill="#fff" fill-opacity="0.03"/><rect x="20" y="76" width="4" height="4" fill="#fff" fill-opacity="0.07"/><rect x="20" y="84" width="4" height="4" fill="#000" fill-opacity="0.07"/><rect x="20" y="84" width="1" height="4" fill="#fff" fill-opacity="0.1"/><rect x="20" y="92" width="4" height="4" fill="#000" fill-opacity="0.02"/><rect x="20" y="92" width="1" height="4" fill="#fff" fill-opacity="0.1"/><rect x="20" y="100" width="4" height="4" fill="#000" fill-opacity="0.07"/><rect x="20" y="104" width="4" height="4" fill="#000" fill-opacity="0.05"/><rect x="20" y="108" width="4" height="4" fill="#fff" fill-opacity="0.04"/><rect x="24" y="4" width="4" height="4" fill="#fff" fill-opacity="0.08"/><rect x="24" y="8" width="4" height="4" fill="#000" fill-opacity="0.03"/><rect x="24" y="16" width="4" height="4" fill="#fff" fill-opacity="0.04"/><rect x="24" y="16" width="1" height="4" fill="#fff" fill-opacity="0.1"/><rect x="24" y="20" width="4" height="4" fill="#fff" fill-opacity="0.05"/><rect x="24" y="28" width="4" height="4" fill="#000" fill-opacity="0.05"/><rect x="24" y="44" width="4" height="4" fill="#fff" fill-opacity="0.03"/><rect x="24" y="48" width="4" height="4" fill="#000" fill-opacity="0.04"/><rect x="24" y="56" width="4" height="4" fill="#000" fill-opacity="0.05"/><rect x="24" y="60" width="4" height="4" fill="#000" fill-opacity="0.03"/><rect x="24" y="68" width="4" height="4" fill="#fff" fill-opacity="0.04"/><rect x="24" y="68" width="1" height="4" fill="#fff" fill-opacity="0.1"/><rect x="24" y="76" width="4" height="4" fill="#000" fill-opacity="0.08"/><rect x="24" y="80" width="4" height="4" fill="#000" fill-opacity="0.09"/><rect x="24" y="84" width="4" height="4" fill="#000" fill-opacity="0.05"/><rect x="24" y="92" width="4" height="4" fill="#000" fill-opacity="0.09"/><rect x="24" y="104" width="4" height="4" fill="#000" fill-opacity="0.06"/><rect x="24" y="112" width="4" height="4" fill="#fff" fill-opacity="0.04"/><rect x="28" y="0" width="4" height="4" fill="#fff" fill-opacity="0.03"/><rect x="28" y="4" width="4" height="4" fill="#fff" fill-opacity="0.09"/><rect x="28" y="12" width="4" height="4" fill="#000" fill-opacity="0.04"/><rect x="28" y="12" width="1" height="4" fill="#fff" fill-opacity="0.1"/><rect x="28" y="16" width="4" height="4" fill="#fff" fill-opacity="0.03"/><rect x="28" y="20" width="4" height="4" fill="#fff" fill-opacity="0.05"/><rect x="28" y="32" width="4" height="4" fill="#000" fill-opacity="0.04"/><rect x="28" y="36" width="4" height="4" fill="#000" fill-opacity="0.06"/><rect x="28" y="52" width="4" height="4" fill="#fff" fill-opacity="0.04"/><rect x="28" y="52" width="1" height="4" fill="#fff" fill-opacity="0.1"/><rect x="28" y="56" width="4" height="4" fill="#fff" fill-opacity="0.09"/><rect x="28" y="60" width="4" height="4" fill="#fff" fill-opacity="0.04"/><rect x="28" y="64" width="4" height="4" fill="#000" fill-opacity="0.03"/><rect x="28" y="68" width="4" height="4" fill="#000" fill-opacity="0.07"/><rect x="28" y="72" width="4" height="4" fill="#000" fill-opacity="0.08"/><rect x="28" y="76" width="4" height="4" fill="#fff" fill-opacity="0.07"/><rect x="28" y="76" width="1" height="4" fill="#fff" fill-opacity="0.1"/><rect x="28" y="84" width="4" height="4" fill="#000" fill-opacity="0.05"/><rect x="28" y="92" width="4" height="4" fill="#000" fill-opacity="0.03"/><rect x="28" y="96" width="4" height="4" fill="#000" fill-opacity="0.05"/><rect x="28" y="96" width="1" height="4" fill="#fff" fill-opacity="0.1"/><rect x="28" y="104" width="4" height="4" fill="#fff" fill-opacity="0.08"/><rect x="28" y="108" width="4" height="4" fill="#000" fill-opacity="0.06"/><rect x="32" y="4" width="4" height="4" fill="#000" fill-opacity="0.04"/><rect x="32" y="20" width="4" height="4" fill="#000" fill-opacity="0.03"/><rect x="32" y="20" width="1" height="4" fill="#fff" fill-opacity="0.1"/><rect x="32" y="36" width="4" height="4" fill="#fff" fill-opacity="0.09"/><rect x="32" y="36" width="1" height="4" fill="#fff" fill-opacity="0.1"/><rect x="32" y="44" width="4" height="4" fill="#fff" fill-opacity="0.03"/><rect x="32" y="44" width="1" height="4" fill="#fff" fill-opacity="0.1"/><rect x="32" y="48" width="4" height="4" fill="#000" fill-opacity="0.03"/><rect x="32" y="72" width="4" height="4" fill="#fff" fill-opacity="0.06"/><rect x="32" y="80" width="4" height="4" fill="#fff" fill-opacity="0.04"/><rect x="32" y="96" width="4" height="4" fill="#fff" fill-opacity="0.08"/><rect x="32" y="100" width="4" height="4" fill="#000" fill-opacity="0.05"/><rect x="32" y="104" width="4" height="4" fill="#000" fill-opacity="0.08"/><rect x="32" y="104" width="1" height="4" fill="#fff" fill-opacity="0.1"/><rect x="32" y="108" width="4" height="4" fill="#000" fill-opacity="0.04"/><rect x="36" y="0" width="4" height="4" fill="#000" fill-opacity="0.08"/><rect x="36" y="4" width="4" height="4" fill="#000" fill-opacity="0.07"/><rect x="36" y="12" width="4" height="4" fill="#000" fill-opacity="0.04"/><rect x="36" y="12" width="1" height="4" fill="#fff" fill-opacity="0.1"/><rect x="36" y="20" width="4" height="4" fill="#000" fill-opacity="0.03"/><rect x="36" y="24" width="4" height="4" fill="#000" fill-opacity="0.04"/><rect x="36" y="24" width="1" height="4" fill="#fff" fill-opacity="0.1"/><rect x="36" y="28" width="4" height="4" fill="#fff" fill-opacity="0.03"/><rect x="36" y="32" width="4" height="4" fill="#fff" fill-opacity="0.05"/><rect x="36" y="40" width="4" height="4" fill="#000" fill-opacity="0.06"/><rect x="36" y="48" width="4" height="4" fill="#000" fill-opacity="0.04"/><rect x="36" y="52" width="4" height="4" fill="#fff" fill-opacity="0.03"/><rect x="36" y="56" width="4" height="4" fill="#000" fill-opacity="0.06"/><rect x="36" y="60" width="4" height="4" fill="#fff" fill-opacity="0.03"/><rect x="36" y="68" width="4" height="4" fill="#fff" fill-opacity="0.04"/><rect x="36" y="80" width="4" height="4" fill="#000" fill-opacity="0.07"/><rect x="36" y="88" width="4" height="4" fill="#fff" fill-opacity="0.04"/><rect x="36" y="92" width="4" height="4" fill="#000" fill-opacity="0.06"/><rect x="36" y="92" width="1" height="4" fill="#fff" fill-opacity="0.1"/><rect x="36" y="108" width="4" height="4" fill="#000" fill-opacity="0.03"/><rect x="36" y="112" width="4" height="4" fill="#fff" fill-opacity="0.06"/><rect x="40" y="0" width="4" height="4" fill="#fff" fill-opacity="0.07"/><rect x="40" y="4" width="4" height="4" fill="#000" fill-opacity="0.05"/><rect x="40" y="4" width="1" height="4" fill="#fff" fill-opacity="0.1"/><rect x="40" y="8" width="4" height="4" fill="#000" fill-opacity="0.03"/><rect x="40" y="12" width="4" height="4" fill="#000" fill-opacity="0.05"/><rect x="40" y="24" width="4" height="4" fill="#000" fill-opacity="0.07"/><rect x="40" y="44" width="4" height="4" fill="#000" fill-opacity="0.03"/><rect x="40" y="48" width="4" height="4" fill="#000" fill-opacity="0.03"/><rect x="40" y="56" width="4" height="4" fill="#000" fill-opacity="0.06"/><rect x="40" y="64" width="4" height="4" fill="#000" fill-opacity="0.06"/><rect x="40" y="68" width="4" height="4" fill="#fff" fill-opacity="0.03"/><rect x="40" y="72" width="4" height="4" fill="#000" fill-opacity="0.03"/><rect x="40" y="72" width="1" height="4" fill="#fff" fill-opacity="0.1"/><rect x="40" y="80" width="4" height="4" fill="#000" fill-opacity="0.04"/><rect x="40" y="84" width="4" height="4" fill="#fff" fill-opacity="0.03"/><rect x="40" y="88" width="4" height="4" fill="#000" fill-opacity="0.04"/><rect x="40" y="96" width="4" height="4" fill="#fff" fill-opacity="0.07"/><rect x="44" y="0" width="4" height="4" fill="#000" fill-opacity="0.03"/><rect x="44" y="12" width="4" height="4" fill="#000" fill-opacity="0.05"/><rect x="44" y="20" width="4" height="4" fill="#fff" fill-opacity="0.04"/><rect x="44" y="28" width="4" height="4" fill="#000" fill-opacity="0.04"/><rect x="44" y="28" width="1" height="4" fill="#fff" fill-opacity="0.1"/><rect x="44" y="32" width="4" height="4" fill="#000" fill-opacity="0.04"/><rect x="44" y="36" width="4" height="4" fill="#fff" fill-opacity="0.03"/><rect x="44" y="40" width="4" height="4" fill="#fff" fill-opacity="0.04"/><rect x="44" y="44" width="4" height="4" fill="#000" fill-opacity="0.06"/><rect x="44" y="48" width="4" height="4" fill="#fff" fill-opacity="0.03"/><rect x="44" y="52" width="4" height="4" fill="#000" fill-opacity="0.06"/><rect x="44" y="52" width="1" height="4" fill="#fff" fill-opacity="0.1"/><rect x="44" y="60" width="4" height="4" fill="#000" fill-opacity="0.03"/><rect x="44" y="68" width="4" height="4" fill="#fff" fill-opacity="0.06"/><rect x="44" y="72" width="4" height="4" fill="#fff" fill-opacity="0.05"/><rect x="44" y="88" width="4" height="4" fill="#000" fill-opacity="0.09"/><rect x="44" y="92" width="4" height="4" fill="#000" fill-opacity="0.06"/><rect x="44" y="92" width="1" height="4" fill="#fff" fill-opacity="0.1"/><rect x="44" y="108" width="4" height="4" fill="#000" fill-opacity="0.04"/><rect x="48" y="8" width="4" height="4" fill="#fff" fill-opacity="0.03"/><rect x="48" y="12" width="4" height="4" fill="#fff" fill-opacity="0.03"/><rect x="48" y="20" width="4" height="4" fill="#000" fill-opacity="0.05"/><rect x="48" y="36" width="4" height="4" fill="#fff" fill-opacity="0.03"/><rect x="48" y="44" width="4" height="4" fill="#000" fill-opacity="0.03"/><rect x="48" y="48" width="4" height="4" fill="#fff" fill-opacity="0.08"/><rect x="48" y="52" width="4" height="4" fill="#fff" fill-opacity="0.03"/><rect x="48" y="60" width="4" height="4" fill="#000" fill-opacity="0.03"/><rect x="48" y="68" width="4" height="4" fill="#fff" fill-opacity="0.04"/><rect x="48" y="76" width="4" height="4" fill="#000" fill-opacity="0.03"/><rect x="48" y="76" width="1" height="4" fill="#fff" fill-opacity="0.1"/><rect x="48" y="80" width="4" height="4" fill="#fff" fill-opacity="0.03"/><rect x="48" y="84" width="4" height="4" fill="#000" fill-opacity="0.03"/><rect x="48" y="100" width="4" height="4" fill="#000" fill-opacity="0.04"/><rect x="48" y="100" width="1" height="4" fill="#fff" fill-opacity="0.1"/><rect x="48" y="104" width="4" height="4" fill="#000" fill-opacity="0.05"/><rect x="48" y="108" width="4" height="4" fill="#fff" fill-opacity="0.04"/><rect x="48" y="112" width="4" height="4" fill="#000" fill-opacity="0.03"/><rect x="48" y="112" width="1" height="4" fill="#fff" fill-opacity="0.1"/><rect x="52" y="4" width="4" height="4" fill="#fff" fill-opacity="0.05"/><rect x="52" y="8" width="4" height="4" fill="#000" fill-opacity="0.06"/><rect x="52" y="12" width="4" height="4" fill="#000" fill-opacity="0.09"/><rect x="52" y="12" width="1" height="4" fill="#fff" fill-opacity="0.1"/><rect x="52" y="20" width="4" height="4" fill="#fff" fill-opacity="0.03"/><rect x="52" y="20" width="1" height="4" fill="#fff" fill-opacity="0.1"/><rect x="52" y="24" width="4" height="4" fill="#fff" fill-opacity="0.08"/><rect x="52" y="28" width="4" height="4" fill="#fff" fill-opacity="0.04"/><rect x="52" y="28" width="1" height="4" fill="#fff" fill-opacity="0.1"/><rect x="52" y="32" width="4" height="4" fill="#fff" fill-opacity="0.09"/><rect x="52" y="32" width="1" height="4" fill="#fff" fill-opacity="0.1"/><rect x="52" y="36" width="4" height="4" fill="#fff" fill-opacity="0.06"/><rect x="52" y="44" width="4" height="4" fill="#fff" fill-opacity="0.03"/><rect x="52" y="44" width="1" height="4" fill="#fff" fill-opacity="0.1"/><rect x="52" y="48" width="4" height="4" fill="#000" fill-opacity="0.07"/><rect x="52" y="48" width="1" height="4" fill="#fff" fill-opacity="0.1"/><rect x="52" y="68" width="4" height="4" fill="#000" fill-opacity="0.08"/><rect x="52" y="92" width="4" height="4" fill="#000" fill-opacity="0.03"/><rect x="52" y="100" width="4" height="4" fill="#fff" fill-opacity="0.06"/><rect x="52" y="108" width="4" height="4" fill="#fff" fill-opacity="0.05"/><rect x="52" y="112" width="4" height="4" fill="#fff" fill-opacity="0.03"/><rect x="56" y="0" width="4" height="4" fill="#fff" fill-opacity="0.04"/><rect x="56" y="4" width="4" height="4" fill="#000" fill-opacity="0.03"/><rect x="56" y="4" width="1" height="4" fill="#fff" fill-opacity="0.1"/><rect x="56" y="8" width="4" height="4" fill="#fff" fill-opacity="0.05"/><rect x="56" y="16" width="4" height="4" fill="#fff" fill-opacity="0.07"/><rect x="56" y="16" width="1" height="4" fill="#fff" fill-opacity="0.1"/><rect x="56" y="32" width="4" height="4" fill="#fff" fill-opacity="0.05"/><rect x="56" y="36" width="4" height="4" fill="#fff" fill-opacity="0.06"/><rect x="56" y="40" width="4" height="4" fill="#fff" fill-opacity="0.06"/><rect x="56" y="44" width="4" height="4" fill="#000" fill-opacity="0.06"/><rect x="56" y="48" width="4" height="4" fill="#fff" fill-opacity="0.05"/><rect x="56" y="52" width="4" height="4" fill="#000" fill-opacity="0.03"/><rect x="56" y="60" width="4" height="4" fill="#fff" fill-opacity="0.06"/><rect x="56" y="68" width="4" height="4" fill="#fff" fill-opacity="0.06"/><rect x="56" y="72" width="4" height="4" fill="#000" fill-opacity="0.04"/><rect x="56" y="80" width="4" height="4" fill="#fff" fill-opacity="0.05"/><rect x="56" y="80" width="1" height="4" fill="#fff" fill-opacity="0.1"/><rect x="56" y="84" width="4" height="4" fill="#fff" fill-opacity="0.04"/><rect x="56" y="84" width="1" height="4" fill="#fff" fill-opacity="0.1"/><rect x="56" y="92" width="4" height="4" fill="#fff" fill-opacity="0.06"/><rect x="56" y="100" width="4" height="4" fill="#fff" fill-opacity="0.03"/><rect x="56" y="104" width="4" height="4" fill="#000" fill-opacity="0.05"/><rect x="56" y="112" width="4" height="4" fill="#fff" fill-opacity="0.03"/><rect x="60" y="4" width="4" height="4" fill="#fff" fill-opacity="0.06"/><rect x="60" y="16" width="4" height="4" fill="#fff" fill-opacity="0.03"/><rect x="60" y="20" width="4" height="4" fill="#fff" fill-opacity="0.04"/><rect x="60" y="24" width="4" height="4" fill="#fff" fill-opacity="0.03"/><rect x="60" y="28" width="4" height="4" fill="#000" fill-opacity="0.04"/><rect x="60" y="32" width="4" height="4" fill="#000" fill-opacity="0.06"/><rect x="60" y="36" width="4" height="4" fill="#fff" fill-opacity="0.06"/><rect x="60" y="48" width="4" height="4" fill="#000" fill-opacity="0.07"/><rect x="60" y="52" width="4" height="4" fill="#000" fill-opacity="0.03"/><rect x="60" y="64" width="4" height="4" fill="#fff" fill-opacity="0.05"/><rect x="60" y="68" width="4" height="4" fill="#000" fill-opacity="0.03"/><rect x="60" y="72" width="4" height="4" fill="#000" fill-opacity="0.06"/><rect x="60" y="76" width="4" height="4" fill="#000" fill-opacity="0.04"/><rect x="60" y="76" width="1" height="4" fill="#fff" fill-opacity="0.1"/><rect x="60" y="84" width="4" height="4" fill="#000" fill-opacity="0.08"/><rect x="60" y="88" width="4" height="4" fill="#000" fill-opacity="0.05"/><rect x="60" y="100" width="4" height="4" fill="#000" fill-opacity="0.03"/><rect x="64" y="20" width="4" height="4" fill="#fff" fill-opacity="0.05"/><rect x="64" y="24" width="4" height="4" fill="#fff" fill-opacity="0.08"/><rect x="64" y="44" width="4" height="4" fill="#fff" fill-opacity="0.04"/><rect x="64" y="52" width="4" height="4" fill="#fff" fill-opacity="0.05"/><rect x="64" y="64" width="4" height="4" fill="#fff" fill-opacity="0.04"/><rect x="64" y="68" width="4" height="4" fill="#000" fill-opacity="0.03"/><rect x="64" y="68" width="1" height="4" fill="#fff" fill-opacity="0.1"/><rect x="64" y="72" width="4" height="4" fill="#fff" fill-opacity="0.04"/><rect x="64" y="76" width="4" height="4" fill="#fff" fill-opacity="0.09"/><rect x="64" y="84" width="4" height="4" fill="#000" fill-opacity="0.04"/><rect x="64" y="96" width="4" height="4" fill="#000" fill-opacity="0.05"/><rect x="64" y="100" width="4" height="4" fill="#000" fill-opacity="0.04"/><rect x="64" y="112" width="4" height="4" fill="#fff" fill-opacity="0.03"/><rect x="68" y="4" width="4" height="4" fill="#fff" fill-opacity="0.08"/><rect x="68" y="16" width="4" height="4" fill="#fff" fill-opacity="0.04"/><rect x="68" y="24" width="4" height="4" fill="#fff" fill-opacity="0.04"/><rect x="68" y="28" width="4" height="4" fill="#fff" fill-opacity="0.03"/><rect x="68" y="32" width="4" height="4" fill="#fff" fill-opacity="0.03"/><rect x="68" y="48" width="4" height="4" fill="#000" fill-opacity="0.04"/><rect x="68" y="52" width="4" height="4" fill="#fff" fill-opacity="0.08"/><rect x="68" y="52" width="1" height="4" fill="#fff" fill-opacity="0.1"/><rect x="68" y="56" width="4" height="4" fill="#fff" fill-opacity="0.05"/><rect x="68" y="60" width="4" height="4" fill="#000" fill-opacity="0.05"/><rect x="68" y="68" width="4" height="4" fill="#000" fill-opacity="0.08"/><rect x="68" y="68" width="1" height="4" fill="#fff" fill-opacity="0.1"/><rect x="68" y="76" width="4" height="4" fill="#000" fill-opacity="0.09"/><rect x="68" y="80" width="4" height="4" fill="#000" fill-opacity="0.04"/><rect x="68" y="88" width="4" height="4" fill="#fff" fill-opacity="0.07"/><rect x="68" y="96" width="4" height="4" fill="#fff" fill-opacity="0.06"/><rect x="68" y="100" width="4" height="4" fill="#000" fill-opacity="0.05"/><rect x="68" y="100" width="1" height="4" fill="#fff" fill-opacity="0.1"/><rect x="68" y="112" width="4" height="4" fill="#000" fill-opacity="0.03"/><rect x="72" y="0" width="4" height="4" fill="#fff" fill-opacity="0.04"/><rect x="72" y="4" width="4" height="4" fill="#fff" fill-opacity="0.04"/><rect x="72" y="8" width="4" height="4" fill="#000" fill-opacity="0.09"/><rect x="72" y="16" width="4" height="4" fill="#fff" fill-opacity="0.03"/><rect x="72" y="20" width="4" height="4" fill="#fff" fill-opacity="0.05"/><rect x="72" y="32" width="4" height="4" fill="#000" fill-opacity="0.03"/><rect x="72" y="44" width="4" height="4" fill="#fff" fill-opacity="0.06"/><rect x="72" y="48" width="4" height="4" fill="#fff" fill-opacity="0.06"/><rect x="72" y="56" width="4" height="4" fill="#000" fill-opacity="0.04"/><rect x="72" y="56" width="1" height="4" fill="#fff" fill-opacity="0.1"/><rect x="72" y="60" width="4" height="4" fill="#000" fill-opacity="0.04"/><rect x="72" y="64" width="4" height="4" fill="#fff" fill-opacity="0.05"/><rect x="72" y="68" width="4" height="4" fill="#fff" fill-opacity="0.09"/><rect x="72" y="68" width="1" height="4" fill="#fff" fill-opacity="0.1"/><rect x="72" y="80" width="4" height="4" fill="#fff" fill-opacity="0.07"/><rect x="72" y="88" width="4" height="4" fill="#000" fill-opacity="0.04"/><rect x="72" y="92" width="4" height="4" fill="#000" fill-opacity="0.03"/><rect x="72" y="96" width="4" height="4" fill="#000" fill-opacity="0.05"/><rect x="72" y="100" width="4" height="4" fill="#000" fill-opacity="0.03"/><rect x="76" y="16" width="4" height="4" fill="#000" fill-opacity="0.03"/><rect x="76" y="32" width="4" height="4" fill="#000" fill-opacity="0.09"/><rect x="76" y="32" width="1" height="4" fill="#fff" fill-opacity="0.1"/><rect x="76" y="36" width="4" height="4" fill="#000" fill-opacity="0.03"/><rect x="76" y="48" width="4" height="4" fill="#fff" fill-opacity="0.09"/><rect x="76" y="56" width="4" height="4" fill="#fff" fill-opacity="0.07"/><rect x="76" y="68" width="4" height="4" fill="#fff" fill-opacity="0.08"/><rect x="76" y="68" width="1" height="4" fill="#fff" fill-opacity="0.1"/><rect x="76" y="72" width="4" height="4" fill="#000" fill-opacity="0.04"/><rect x="76" y="76" width="4" height="4" fill="#000" fill-opacity="0.05"/><rect x="76" y="80" width="4" height="4" fill="#fff" fill-opacity="0.03"/><rect x="76" y="84" width="4" height="4" fill="#fff" fill-opacity="0.05"/><rect x="76" y="100" width="4" height="4" fill="#000" fill-opacity="0.09"/><rect x="76" y="104" width="4" height="4" fill="#000" fill-opacity="0.03"/><rect x="80" y="4" width="4" height="4" fill="#000" fill-opacity="0.04"/><rect x="80" y="12" width="4" height="4" fill="#fff" fill-opacity="0.03"/><rect x="80" y="16" width="4" height="4" fill="#fff" fill-opacity="0.09"/><rect x="80" y="28" width="4" height="4" fill="#fff" fill-opacity="0.07"/><rect x="80" y="32" width="4" height="4" fill="#000" fill-opacity="0.04"/><rect x="80" y="36" width="4" height="4" fill="#fff" fill-opacity="0.07"/><rect x="80" y="44" width="4" height="4" fill="#000" fill-opacity="0.09"/><rect x="80" y="48" width="4" height="4" fill="#000" fill-opacity="0.06"/><rect x="80" y="52" width="4" height="4" fill="#fff" fill-opacity="0.05"/><rect x="80" y="56" width="4" height="4" fill="#000" fill-opacity="0.08"/><rect x="80" y="60" width="4" height="4" fill="#fff" fill-opacity="0.09"/><rect x="80" y="60" width="1" height="4" fill="#fff" fill-opacity="0.1"/><rect x="80" y="68" width="4" height="4" fill="#000" fill-opacity="0.05"/><rect x="80" y="68" width="1" height="4" fill="#fff" fill-opacity="0.1"/><rect x="80" y="72" width="4" height="4" fill="#000" fill-opacity="0.03"/><rect x="80" y="84" width="4" height="4" fill="#000" fill-opacity="0.03"/><rect x="80" y="92" width="4" height="4" fill="#000" fill-opacity="0.03"/><rect x="80" y="96" width="4" height="4" fill="#000" fill-opacity="0.09"/><rect x="80" y="100" width="4" height="4" fill="#000" fill-opacity="0.05"/><rect x="80" y="104" width="4" height="4" fill="#000" fill-opacity="0.04"/><rect x="80" y="104" width="1" height="4" fill="#fff" fill-opacity="0.1"/><rect x="80" y="108" width="4" height="4" fill="#000" fill-opacity="0.03"/><rect x="80" y="112" width="4" height="4" fill="#fff" fill-opacity="0.05"/><rect x="84" y="0" width="4" height="4" fill="#000" fill-opacity="0.05"/><rect x="84" y="0" width="1" height="4" fill="#fff" fill-opacity="0.1"/><rect x="84" y="4" width="4" height="4" fill="#fff" fill-opacity="0.03"/><rect x="84" y="8" width="4" height="4" fill="#fff" fill-opacity="0.09"/><rect x="84" y="16" width="4" height="4" fill="#fff" fill-opacity="0.06"/><rect x="84" y="16" width="1" height="4" fill="#fff" fill-opacity="0.1"/><rect x="84" y="20" width="4" height="4" fill="#000" fill-opacity="0.09"/><rect x="84" y="20" width="1" height="4" fill="#fff" fill-opacity="0.1"/><rect x="84" y="24" width="4" height="4" fill="#000" fill-opacity="0.06"/><rect x="84" y="24" width="1" height="4" fill="#fff" fill-opacity="0.1"/><rect x="84" y="28" width="4" height="4" fill="#000" fill-opacity="0.09"/><rect x="84" y="32" width="4" height="4" fill="#000" fill-opacity="0.02"/><rect x="84" y="32" width="1" height="4" fill="#fff" fill-opacity="0.1"/><rect x="84" y="36" width="4" height="4" fill="#000" fill-opacity="0.04"/><rect x="84" y="40" width="4" height="4" fill="#000" fill-opacity="0.03"/><rect x="84" y="52" width="4" height="4" fill="#000" fill-opacity="0.02"/><rect x="84" y="56" width="4" height="4" fill="#000" fill-opacity="0.08"/><rect x="84" y="60" width="4" height="4" fill="#000" fill-opacity="0.05"/><rect x="84" y="64" width="4" height="4" fill="#fff" fill-opacity="0.04"/><rect x="84" y="64" width="1" height="4" fill="#fff" fill-opacity="0.1"/><rect x="84" y="80" width="4" height="4" fill="#fff" fill-opacity="0.03"/><rect x="84" y="84" width="4" height="4" fill="#000" fill-opacity="0.05"/><rect x="84" y="88" width="4" height="4" fill="#fff" fill-opacity="0.04"/><rect x="84" y="92" width="4" height="4" fill="#000" fill-opacity="0.05"/><rect x="84" y="108" width="4" height="4" fill="#fff" fill-opacity="0.06"/><rect x="84" y="112" width="4" height="4" fill="#000" fill-opacity="0.07"/><rect x="88" y="8" width="4" height="4" fill="#000" fill-opacity="0.07"/><rect x="88" y="16" width="4" height="4" fill="#fff" fill-opacity="0.05"/><rect x="88" y="32" width="4" height="4" fill="#fff" fill-opacity="0.03"/><rect x="88" y="40" width="4" height="4" fill="#000" fill-opacity="0.04"/><rect x="88" y="44" width="4" height="4" fill="#000" fill-opacity="0.05"/><rect x="88" y="52" width="4" height="4" fill="#000" fill-opacity="0.06"/><rect x="88" y="56" width="4" height="4" fill="#fff" fill-opacity="0.08"/><rect x="88" y="56" width="1" height="4" fill="#fff" fill-opacity="0.1"/><rect x="88" y="60" width="4" height="4" fill="#fff" fill-opacity="0.06"/><rect x="88" y="64" width="4" height="4" fill="#fff" fill-opacity="0.05"/><rect x="88" y="68" width="4" height="4" fill="#000" fill-opacity="0.04"/><rect x="88" y="72" width="4" height="4" fill="#000" fill-opacity="0.03"/><rect x="88" y="72" width="1" height="4" fill="#fff" fill-opacity="0.1"/><rect x="88" y="84" width="4" height="4" fill="#fff" fill-opacity="0.03"/><rect x="88" y="96" width="4" height="4" fill="#000" fill-opacity="0.05"/><rect x="88" y="104" width="4" height="4" fill="#fff" fill-opacity="0.04"/><rect x="88" y="108" width="4" height="4" fill="#000" fill-opacity="0.05"/><rect x="88" y="112" width="4" height="4" fill="#000" fill-opacity="0.03"/><rect x="88" y="112" width="1" height="4" fill="#fff" fill-opacity="0.1"/><rect x="92" y="4" width="4" height="4" fill="#000" fill-opacity="0.07"/><rect x="92" y="4" width="1" height="4" fill="#fff" fill-opacity="0.1"/><rect x="92" y="20" width="4" height="4" fill="#000" fill-opacity="0.05"/><rect x="92" y="24" width="4" height="4" fill="#fff" fill-opacity="0.03"/><rect x="92" y="32" width="4" height="4" fill="#000" fill-opacity="0.07"/><rect x="92" y="32" width="1" height="4" fill="#fff" fill-opacity="0.1"/><rect x="92" y="40" width="4" height="4" fill="#000" fill-opacity="0.02"/><rect x="92" y="40" width="1" height="4" fill="#fff" fill-opacity="0.1"/><rect x="92" y="64" width="4" height="4" fill="#fff" fill-opacity="0.04"/><rect x="92" y="72" width="4" height="4" fill="#000" fill-opacity="0.04"/><rect x="92" y="80" width="4" height="4" fill="#fff" fill-opacity="0.03"/><rect x="92" y="92" width="4" height="4" fill="#000" fill-opacity="0.08"/><rect x="92" y="92" width="1" height="4" fill="#fff" fill-opacity="0.1"/><rect x="92" y="96" width="4" height="4" fill="#fff" fill-opacity="0.06"/><rect x="92" y="104" width="4" height="4" fill="#000" fill-opacity="0.04"/><rect x="92" y="112" width="4" height="4" fill="#fff" fill-opacity="0.09"/><rect x="92" y="112" width="1" height="4" fill="#fff" fill-opacity="0.1"/><rect x="96" y="4" width="4" height="4" fill="#000" fill-opacity="0.06"/><rect x="96" y="4" width="1" height="4" fill="#fff" fill-opacity="0.1"/><rect x="96" y="12" width="4" height="4" fill="#fff" fill-opacity="0.05"/><rect x="96" y="12" width="1" height="4" fill="#fff" fill-opacity="0.1"/><rect x="96" y="16" width="4" height="4" fill="#000" fill-opacity="0.04"/><rect x="96" y="20" width="4" height="4" fill="#000" fill-opacity="0.03"/><rect x="96" y="24" width="4" height="4" fill="#000" fill-opacity="0.07"/><rect x="96" y="28" width="4" height="4" fill="#fff" fill-opacity="0.03"/><rect x="96" y="32" width="4" height="4" fill="#000" fill-opacity="0.05"/><rect x="96" y="56" width="4" height="4" fill="#fff" fill-opacity="0.03"/><rect x="96" y="56" width="1" height="4" fill="#fff" fill-opacity="0.1"/><rect x="96" y="64" width="4" height="4" fill="#fff" fill-opacity="0.03"/><rect x="96" y="68" width="4" height="4" fill="#000" fill-opacity="0.05"/><rect x="96" y="72" width="4" height="4" fill="#fff" fill-opacity="0.03"/><rect x="96" y="76" width="4" height="4" fill="#fff" fill-opacity="0.04"/><rect x="96" y="80" width="4" height="4" fill="#000" fill-opacity="0.08"/><rect x="96" y="84" width="4" height="4" fill="#fff" fill-opacity="0.03"/><rect x="96" y="88" width="4" height="4" fill="#000" fill-opacity="0.03"/><rect x="96" y="92" width="4" height="4" fill="#fff" fill-opacity="0.03"/><rect x="96" y="104" width="4" height="4" fill="#fff" fill-opacity="0.04"/><rect x="96" y="108" width="4" height="4" fill="#000" fill-opacity="0.03"/><rect x="96" y="108" width="1" height="4" fill="#fff" fill-opacity="0.1"/><rect x="100" y="8" width="4" height="4" fill="#000" fill-opacity="0.08"/><rect x="100" y="24" width="4" height="4" fill="#fff" fill-opacity="0.05"/><rect x="100" y="32" width="4" height="4" fill="#000" fill-opacity="0.05"/><rect x="100" y="36" width="4" height="4" fill="#fff" fill-opacity="0.04"/><rect x="100" y="36" width="1" height="4" fill="#fff" fill-opacity="0.1"/><rect x="100" y="40" width="4" height="4" fill="#000" fill-opacity="0.04"/><rect x="100" y="44" width="4" height="4" fill="#fff" fill-opacity="0.05"/><rect x="100" y="48" width="4" height="4" fill="#000" fill-opacity="0.05"/><rect x="100" y="52" width="4" height="4" fill="#000" fill-opacity="0.08"/><rect x="100" y="60" width="4" height="4" fill="#fff" fill-opacity="0.08"/><rect x="100" y="64" width="4" height="4" fill="#000" fill-opacity="0.05"/><rect x="100" y="64" width="1" height="4" fill="#fff" fill-opacity="0.1"/><rect x="100" y="80" width="4" height="4" fill="#fff" fill-opacity="0.03"/><rect x="100" y="84" width="4" height="4" fill="#000" fill-opacity="0.03"/><rect x="100" y="88" width="4" height="4" fill="#fff" fill-opacity="0.05"/><rect x="100" y="92" width="4" height="4" fill="#000" fill-opacity="0.05"/><rect x="100" y="100" width="4" height="4" fill="#fff" fill-opacity="0.09"/><rect x="100" y="100" width="1" height="4" fill="#fff" fill-opacity="0.1"/><rect x="100" y="104" width="4" height="4" fill="#fff" fill-opacity="0.04"/><rect x="100" y="104" width="1" height="4" fill="#fff" fill-opacity="0.1"/><rect x="100" y="108" width="4" height="4" fill="#000" fill-opacity="0.03"/><rect x="104" y="0" width="4" height="4" fill="#fff" fill-opacity="0.06"/><rect x="104" y="4" width="4" height="4" fill="#fff" fill-opacity="0.05"/><rect x="104" y="8" width="4" height="4" fill="#fff" fill-opacity="0.05"/><rect x="104" y="12" width="4" height="4" fill="#000" fill-opacity="0.03"/><rect x="104" y="12" width="1" height="4" fill="#fff" fill-opacity="0.1"/><rect x="104" y="16" width="4" height="4" fill="#000" fill-opacity="0.05"/><rect x="104" y="20" width="4" height="4" fill="#000" fill-opacity="0.03"/><rect x="104" y="20" width="1" height="4" fill="#fff" fill-opacity="0.1"/><rect x="104" y="24" width="4" height="4" fill="#fff" fill-opacity="0.05"/><rect x="104" y="28" width="4" height="4" fill="#000" fill-opacity="0.04"/><rect x="104" y="48" width="4" height="4" fill="#000" fill-opacity="0.03"/><rect x="104" y="48" width="1" height="4" fill="#fff" fill-opacity="0.1"/><rect x="104" y="52" width="4" height="4" fill="#000" fill-opacity="0.04"/><rect x="104" y="56" width="4" height="4" fill="#fff" fill-opacity="0.04"/><rect x="104" y="60" width="4" height="4" fill="#fff" fill-opacity="0.04"/><rect x="104" y="64" width="4" height="4" fill="#fff" fill-opacity="0.04"/><rect x="104" y="68" width="4" height="4" fill="#fff" fill-opacity="0.04"/><rect x="104" y="88" width="4" height="4" fill="#fff" fill-opacity="0.02"/><rect x="104" y="88" width="1" height="4" fill="#fff" fill-opacity="0.1"/><rect x="104" y="92" width="4" height="4" fill="#fff" fill-opacity="0.07"/><rect x="104" y="96" width="4" height="4" fill="#fff" fill-opacity="0.06"/><rect x="104" y="100" width="4" height="4" fill="#000" fill-opacity="0.03"/><rect x="104" y="112" width="4" height="4" fill="#000" fill-opacity="0.04"/><rect x="104" y="112" width="1" height="4" fill="#fff" fill-opacity="0.1"/><rect x="108" y="16" width="4" height="4" fill="#000" fill-opacity="0.05"/><rect x="108" y="24" width="4" height="4" fill="#000" fill-opacity="0.03"/><rect x="108" y="28" width="4" height="4" fill="#fff" fill-opacity="0.09"/><rect x="108" y="32" width="4" height="4" fill="#000" fill-opacity="0.09"/><rect x="108" y="56" width="4" height="4" fill="#000" fill-opacity="0.04"/><rect x="108" y="60" width="4" height="4" fill="#fff" fill-opacity="0.03"/><rect x="108" y="60" width="1" height="4" fill="#fff" fill-opacity="0.1"/><rect x="108" y="68" width="4" height="4" fill="#fff" fill-opacity="0.04"/><rect x="108" y="72" width="4" height="4" fill="#fff" fill-opacity="0.06"/><rect x="108" y="76" width="4" height="4" fill="#000" fill-opacity="0.05"/><rect x="108" y="84" width="4" height="4" fill="#fff" fill-opacity="0.05"/><rect x="108" y="92" width="4" height="4" fill="#fff" fill-opacity="0.05"/><rect x="108" y="100" width="4" height="4" fill="#000" fill-opacity="0.03"/><rect x="108" y="112" width="4" height="4" fill="#000" fill-opacity="0.08"/><rect x="112" y="0" width="4" height="4" fill="#fff" fill-opacity="0.03"/><rect x="112" y="4" width="4" height="4" fill="#000" fill-opacity="0.04"/><rect x="112" y="32" width="4" height="4" fill="#fff" fill-opacity="0.03"/><rect x="112" y="36" width="4" height="4" fill="#000" fill-opacity="0.04"/><rect x="112" y="36" width="1" height="4" fill="#fff" fill-opacity="0.1"/><rect x="112" y="44" width="4" height="4" fill="#fff" fill-opacity="0.03"/><rect x="112" y="44" width="1" height="4" fill="#fff" fill-opacity="0.1"/><rect x="112" y="48" width="4" height="4" fill="#000" fill-opacity="0.06"/><rect x="112" y="48" width="1" height="4" fill="#fff" fill-opacity="0.1"/><rect x="112" y="52" width="4" height="4" fill="#fff" fill-opacity="0.04"/><rect x="112" y="56" width="4" height="4" fill="#fff" fill-opacity="0.03"/><rect x="112" y="64" width="4" height="4" fill="#fff" fill-opacity="0.08"/><rect x="112" y="76" width="4" height="4" fill="#fff" fill-opacity="0.03"/><rect x="112" y="76" width="1" height="4" fill="#fff" fill-opacity="0.1"/><rect x="112" y="80" width="4" height="4" fill="#fff" fill-opacity="0.06"/><rect x="112" y="100" width="4" height="4" fill="#000" fill-opacity="0.07"/><rect x="112" y="104" width="4" height="4" fill="#fff" fill-opacity="0.03"/><rect x="112" y="108" width="4" height="4" fill="#fff" fill-opacity="0.05"/><rect x="112" y="108" width="1" height="4" fill="#fff" fill-opacity="0.1"/></pattern>
</defs>
<rect width="821" height="548" filter="url(#nz)"/>
<rect width="821" height="548" filter="url(#nz2)" mask="url(#mk)" opacity="0.8"/>
<rect width="821" height="548" fill="url(#gr)"/><rect width="821" height="548" fill="url(#bk)"/><rect width="821" height="548" fill="url(#bk2)"/>
<rect x="0" y="0" width="821" height="2" fill="#fff" opacity="0.25"/>
<rect x="0" y="0" width="3" height="548" fill="#fff" opacity="0.22"/>
<rect x="818" y="0" width="3" height="548" fill="#fff" opacity="0.15"/>
<rect x="0" y="545" width="821" height="3" fill="#fff" opacity="0.12"/>
<g><rect x="377.4" y="37.6" width="3" height="3" fill="rgb(210,210,210)" opacity="0.5"/><rect x="379.3" y="41.1" width="3.5" height="3.5" fill="rgb(80,80,80)" opacity="0.55"/><rect x="381.7" y="45.4" width="2.5" height="2.5" fill="rgb(80,80,80)" opacity="0.55"/><rect x="383.1" y="47.4" width="3.5" height="3.5" fill="rgb(60,60,60)" opacity="0.55"/><rect x="385.2" y="52.6" width="3.5" height="3.5" fill="rgb(80,80,80)" opacity="0.55"/><rect x="384.1" y="55.3" width="2.5" height="2.5" fill="rgb(60,60,60)" opacity="0.55"/><rect x="385.0" y="57.6" width="3" height="3" fill="rgb(60,60,60)" opacity="0.55"/><rect x="385.8" y="61.5" width="3.5" height="3.5" fill="rgb(90,90,90)" opacity="0.55"/><rect x="384.6" y="64.1" width="3.5" height="3.5" fill="rgb(60,60,60)" opacity="0.55"/><rect x="383.3" y="68.3" width="3.5" height="3.5" fill="rgb(190,190,190)" opacity="0.5"/><rect x="384.7" y="72.3" width="3" height="3" fill="rgb(100,100,100)" opacity="0.55"/><rect x="384.6" y="75.0" width="2.5" height="2.5" fill="rgb(60,60,60)" opacity="0.55"/><rect x="384.2" y="77.1" width="3" height="3" fill="rgb(70,70,70)" opacity="0.55"/><rect x="384.2" y="82.6" width="2.5" height="2.5" fill="rgb(60,60,60)" opacity="0.55"/><rect x="383.8" y="85.5" width="3" height="3" fill="rgb(210,210,210)" opacity="0.5"/><rect x="385.7" y="88.0" width="3.5" height="3.5" fill="rgb(70,70,70)" opacity="0.55"/><rect x="385.5" y="93.2" width="3" height="3" fill="rgb(100,100,100)" opacity="0.55"/><rect x="384.8" y="96.3" width="2.5" height="2.5" fill="rgb(190,190,190)" opacity="0.5"/><rect x="383.9" y="101.2" width="2.5" height="2.5" fill="rgb(60,60,60)" opacity="0.55"/><rect x="403.4" y="52.5" width="3" height="3" fill="rgb(90,90,90)" opacity="0.55"/><rect x="403.9" y="57.7" width="3" height="3" fill="rgb(80,80,80)" opacity="0.55"/><rect x="404.8" y="59.8" width="2.5" height="2.5" fill="rgb(190,190,190)" opacity="0.5"/><rect x="403.6" y="65.6" width="2.5" height="2.5" fill="rgb(100,100,100)" opacity="0.55"/><rect x="404.4" y="68.5" width="2.5" height="2.5" fill="rgb(70,70,70)" opacity="0.55"/><rect x="406.6" y="72.1" width="2.5" height="2.5" fill="rgb(100,100,100)" opacity="0.55"/><rect x="349.2" y="118.1" width="3" height="3" fill="rgb(100,100,100)" opacity="0.55"/><rect x="351.3" y="116.6" width="2.5" height="2.5" fill="rgb(90,90,90)" opacity="0.55"/><rect x="356.2" y="116.0" width="2.5" height="2.5" fill="rgb(210,210,210)" opacity="0.5"/><rect x="360.4" y="114.9" width="3" height="3" fill="rgb(80,80,80)" opacity="0.55"/><rect x="361.9" y="112.6" width="3.5" height="3.5" fill="rgb(90,90,90)" opacity="0.55"/><rect x="365.6" y="111.5" width="3.5" height="3.5" fill="rgb(90,90,90)" opacity="0.55"/><rect x="370.9" y="113.1" width="3" height="3" fill="rgb(70,70,70)" opacity="0.55"/><rect x="372.3" y="111.1" width="2.5" height="2.5" fill="rgb(100,100,100)" opacity="0.55"/><rect x="376.8" y="111.0" width="3.5" height="3.5" fill="rgb(190,190,190)" opacity="0.5"/><rect x="380.1" y="111.5" width="2.5" height="2.5" fill="rgb(70,70,70)" opacity="0.55"/><rect x="382.5" y="111.0" width="3" height="3" fill="rgb(70,70,70)" opacity="0.55"/><rect x="386.1" y="111.7" width="2.5" height="2.5" fill="rgb(60,60,60)" opacity="0.55"/><rect x="389.5" y="111.1" width="2.5" height="2.5" fill="rgb(60,60,60)" opacity="0.55"/><rect x="392.6" y="111.4" width="2.5" height="2.5" fill="rgb(80,80,80)" opacity="0.55"/><rect x="395.9" y="112.7" width="3.5" height="3.5" fill="rgb(110,110,110)" opacity="0.55"/><rect x="400.1" y="112.3" width="3.5" height="3.5" fill="rgb(80,80,80)" opacity="0.55"/><rect x="401.8" y="111.6" width="3.5" height="3.5" fill="rgb(110,110,110)" opacity="0.55"/><rect x="406.0" y="112.4" width="3" height="3" fill="rgb(70,70,70)" opacity="0.55"/><rect x="409.0" y="113.8" width="2.5" height="2.5" fill="rgb(80,80,80)" opacity="0.55"/><rect x="411.9" y="114.4" width="3.5" height="3.5" fill="rgb(60,60,60)" opacity="0.55"/><rect x="417.1" y="114.1" width="3" height="3" fill="rgb(110,110,110)" opacity="0.55"/><rect x="418.8" y="115.4" width="3" height="3" fill="rgb(70,70,70)" opacity="0.55"/><rect x="424.0" y="114.6" width="3.5" height="3.5" fill="rgb(210,210,210)" opacity="0.5"/><rect x="425.1" y="116.6" width="3.5" height="3.5" fill="rgb(190,190,190)" opacity="0.5"/><rect x="428.7" y="116.0" width="3.5" height="3.5" fill="rgb(70,70,70)" opacity="0.55"/><rect x="432.5" y="117.3" width="3.5" height="3.5" fill="rgb(190,190,190)" opacity="0.5"/><rect x="436.9" y="119.9" width="3" height="3" fill="rgb(210,210,210)" opacity="0.5"/><rect x="440.8" y="119.8" width="3" height="3" fill="rgb(60,60,60)" opacity="0.55"/><rect x="444.5" y="120.2" width="3.5" height="3.5" fill="rgb(90,90,90)" opacity="0.55"/><rect x="447.1" y="122.7" width="3" height="3" fill="rgb(210,210,210)" opacity="0.5"/><rect x="452.2" y="122.9" width="3.5" height="3.5" fill="rgb(80,80,80)" opacity="0.55"/><rect x="455.0" y="124.8" width="3.5" height="3.5" fill="rgb(110,110,110)" opacity="0.55"/><rect x="345.5" y="126.5" width="3" height="3" fill="rgb(90,90,90)" opacity="0.55"/><rect x="343.3" y="129.2" width="2.5" height="2.5" fill="rgb(190,190,190)" opacity="0.5"/><rect x="343.3" y="132.5" width="2.5" height="2.5" fill="rgb(110,110,110)" opacity="0.55"/><rect x="339.8" y="135.2" width="3.5" height="3.5" fill="rgb(60,60,60)" opacity="0.55"/><rect x="338.9" y="139.9" width="2.5" height="2.5" fill="rgb(80,80,80)" opacity="0.55"/><rect x="338.4" y="141.0" width="3" height="3" fill="rgb(90,90,90)" opacity="0.55"/><rect x="338.7" y="144.5" width="3.5" height="3.5" fill="rgb(110,110,110)" opacity="0.55"/><rect x="340.8" y="149.2" width="3" height="3" fill="rgb(210,210,210)" opacity="0.5"/><rect x="339.5" y="149.9" width="3.5" height="3.5" fill="rgb(60,60,60)" opacity="0.55"/><rect x="341.8" y="154.4" width="3.5" height="3.5" fill="rgb(100,100,100)" opacity="0.55"/><rect x="344.5" y="156.7" width="3" height="3" fill="rgb(80,80,80)" opacity="0.55"/><rect x="346.3" y="160.3" width="2.5" height="2.5" fill="rgb(100,100,100)" opacity="0.55"/><rect x="349.2" y="165.2" width="3" height="3" fill="rgb(70,70,70)" opacity="0.55"/><rect x="351.1" y="166.6" width="2.5" height="2.5" fill="rgb(110,110,110)" opacity="0.55"/><rect x="355.4" y="167.3" width="3" height="3" fill="rgb(210,210,210)" opacity="0.5"/><rect x="357.2" y="168.3" width="3.5" height="3.5" fill="rgb(210,210,210)" opacity="0.5"/><rect x="362.0" y="170.7" width="3" height="3" fill="rgb(100,100,100)" opacity="0.55"/><rect x="364.6" y="174.2" width="3" height="3" fill="rgb(80,80,80)" opacity="0.55"/><rect x="368.6" y="175.4" width="2.5" height="2.5" fill="rgb(90,90,90)" opacity="0.55"/><rect x="370.5" y="177.5" width="2.5" height="2.5" fill="rgb(190,190,190)" opacity="0.5"/><rect x="373.4" y="177.2" width="3" height="3" fill="rgb(60,60,60)" opacity="0.55"/><rect x="376.6" y="179.9" width="3" height="3" fill="rgb(110,110,110)" opacity="0.55"/><rect x="378.8" y="182.4" width="3.5" height="3.5" fill="rgb(70,70,70)" opacity="0.55"/><rect x="383.6" y="184.5" width="2.5" height="2.5" fill="rgb(70,70,70)" opacity="0.55"/><rect x="384.9" y="185.2" width="3" height="3" fill="rgb(70,70,70)" opacity="0.55"/><rect x="377.6" y="139.2" width="3" height="3" fill="rgb(110,110,110)" opacity="0.55"/><rect x="378.5" y="142.4" width="3.5" height="3.5" fill="rgb(110,110,110)" opacity="0.55"/><rect x="377.0" y="144.9" width="3" height="3" fill="rgb(190,190,190)" opacity="0.5"/><rect x="378.2" y="147.1" width="3" height="3" fill="rgb(70,70,70)" opacity="0.55"/><rect x="379.0" y="150.5" width="3.5" height="3.5" fill="rgb(110,110,110)" opacity="0.55"/><rect x="379.9" y="154.1" width="3.5" height="3.5" fill="rgb(80,80,80)" opacity="0.55"/><rect x="381.5" y="159.0" width="3" height="3" fill="rgb(210,210,210)" opacity="0.5"/><rect x="381.7" y="163.2" width="3" height="3" fill="rgb(90,90,90)" opacity="0.55"/><rect x="422.3" y="125.7" width="3.5" height="3.5" fill="rgb(80,80,80)" opacity="0.55"/><rect x="425.5" y="130.1" width="3" height="3" fill="rgb(100,100,100)" opacity="0.55"/><rect x="428.9" y="132.9" width="3" height="3" fill="rgb(90,90,90)" opacity="0.55"/><rect x="432.1" y="135.4" width="3.5" height="3.5" fill="rgb(100,100,100)" opacity="0.55"/><rect x="432.9" y="137.4" width="3.5" height="3.5" fill="rgb(70,70,70)" opacity="0.55"/><rect x="433.4" y="140.6" width="3.5" height="3.5" fill="rgb(60,60,60)" opacity="0.55"/><rect x="437.5" y="144.6" width="3" height="3" fill="rgb(70,70,70)" opacity="0.55"/><rect x="437.5" y="147.0" width="3" height="3" fill="rgb(210,210,210)" opacity="0.5"/><rect x="441.5" y="151.9" width="3" height="3" fill="rgb(190,190,190)" opacity="0.5"/><rect x="441.9" y="154.5" width="3" height="3" fill="rgb(110,110,110)" opacity="0.55"/><rect x="440.5" y="158.0" width="3.5" height="3.5" fill="rgb(210,210,210)" opacity="0.5"/><rect x="436.7" y="159.1" width="3" height="3" fill="rgb(60,60,60)" opacity="0.55"/><rect x="451.9" y="123.4" width="2.5" height="2.5" fill="rgb(60,60,60)" opacity="0.55"/><rect x="454.1" y="125.2" width="3" height="3" fill="rgb(100,100,100)" opacity="0.55"/><rect x="458.0" y="128.8" width="2.5" height="2.5" fill="rgb(210,210,210)" opacity="0.5"/><rect x="459.2" y="132.4" width="3.5" height="3.5" fill="rgb(100,100,100)" opacity="0.55"/><rect x="458.8" y="136.3" width="2.5" height="2.5" fill="rgb(190,190,190)" opacity="0.5"/><rect x="458.5" y="139.0" width="3.5" height="3.5" fill="rgb(80,80,80)" opacity="0.55"/><rect x="457.8" y="143.1" width="3.5" height="3.5" fill="rgb(90,90,90)" opacity="0.55"/><rect x="341.1" y="134.9" width="2.5" height="2.5" fill="rgb(80,80,80)" opacity="0.55"/><rect x="346.5" y="136.1" width="2.5" height="2.5" fill="rgb(110,110,110)" opacity="0.55"/><rect x="348.8" y="136.3" width="2.5" height="2.5" fill="rgb(90,90,90)" opacity="0.55"/><rect x="353.7" y="137.0" width="2.5" height="2.5" fill="rgb(70,70,70)" opacity="0.55"/></g>
<g transform="translate(-112,-232)" fill="none" stroke="#e0e0e0" stroke-width="1.3" opacity="0.6">
<circle cx="499" cy="340" r="4"/><circle cx="482" cy="362" r="3.5"/><circle cx="520" cy="359" r="3"/><circle cx="535" cy="372" r="2.5"/><circle cx="465" cy="356" r="2.5"/>
</g>
<g transform="translate(-112,-232)">
<text x="114" y="735" font-family="Liberation Sans, sans-serif" font-size="16" fill="#3a3a3a" opacity="0.8" letter-spacing="-0.1">200.000 µm</text>
<path d="M127 745 H190 M127 741 V749 M190 741 V749" stroke="#3a3a3a" stroke-width="1.4" fill="none" opacity="0.75"/>
</g>
</svg>

<!-- ===== bottom toolbar ===== -->
<div class="a" style="left:0;top:856px;width:1319px;height:37px;background:#363636"></div>
<div class="a" style="left:0;top:893px;width:1313px;height:30px;background:#2a2a2a"></div>
<div class="a" style="left:1313px;top:893px;width:6px;height:30px;background:#363636"></div>
<!-- skip back -->
<svg style="left:0;top:856px" width="140" height="37">
<g fill="#d8d8d8">
<rect x="5" y="12.8" width="2" height="11"/><path d="M14.3 12.8 V23.8 L7.5 18.3 Z"/>
<path d="M42 12 V25 L53 18.5 Z"/><path d="M57.5 22.5 V27 H53 Z" fill="#9a9a9a"/>
<path d="M81 13 V24 L88 18.5 Z"/><rect x="88" y="13" width="2" height="11"/>
<path d="M116 13 V24 L123 18.5 Z"/><path d="M122.5 13 V24 L129.5 18.5 Z"/><rect x="129.5" y="13" width="2" height="11"/>
</g></svg>
<div class="inp" style="left:146px;top:864px;width:80px;height:22px"></div>
<div class="t" style="left:149px;top:868px;font-size:13px;color:#dcdcdc;word-spacing:1px">2 / 2</div>
<svg style="left:215px;top:866px" width="10" height="20"><g fill="none" stroke="#cfcfcf" stroke-width="1.1"><path d="M1.5 5.5 L4 3 L6.5 5.5"/><path d="M1.5 13.5 L4 16 L6.5 13.5"/></g></svg>
<div class="a" style="left:232px;top:860px;width:1px;height:28px;background:#2b2b2b"></div>
<div class="inp" style="left:239px;top:864px;width:79px;height:22px"></div>
<div class="t" style="left:242.5px;top:868px;font-size:13px;color:#dcdcdc;letter-spacing:-0.3px">127.87%</div>
<svg style="left:307px;top:866px" width="10" height="20"><g fill="none" stroke="#cfcfcf" stroke-width="1.1"><path d="M1.5 5.5 L4 3 L6.5 5.5"/><path d="M1.5 13.5 L4 16 L6.5 13.5"/></g></svg>
<svg style="left:320px;top:854.5px" width="170" height="37">
<g fill="none" stroke="#dcdcdc" stroke-width="1.6">
<path d="M13.8 18 V13.2 H18.5"/><path d="M22.5 13.2 H27.2 V18"/><path d="M27.2 21.5 V26.2 H22.5"/><path d="M18.5 26.2 H13.8 V21.5"/>
<path d="M57.5 11 V15.5"/><path d="M57.5 23.5 V28"/><path d="M50.8 19.5 H55"/><path d="M60 19.5 H64.5"/>
</g>
<circle cx="57.5" cy="19.5" r="1.3" fill="#dcdcdc"/>
</svg>
<div class="t" style="left:405px;top:864px;font-size:18px;line-height:20px;color:#dcdcdc;letter-spacing:-1.8px;-webkit-text-stroke:0">2D</div>
<div class="a" style="left:439px;top:861px;width:1px;height:27px;background:#2b2b2b"></div>
<svg style="left:450px;top:862px" width="22" height="24">
<g fill="none" stroke="#dcdcdc" stroke-width="1.8">
<path d="M4 13 V10.5 A3.5 3.5 0 0 1 7.5 7 H17"/><path d="M18 11 V13.5 A3.5 3.5 0 0 1 14.5 17 H5"/>
</g>
<g fill="#dcdcdc"><path d="M15.5 3.8 L19.5 7 L15.5 10.2 Z"/><path d="M6.5 13.8 L2.5 17 L6.5 20.2 Z"/><path d="M12 9.5 V14.5 L9 12 Z"/></g>
</svg>
<div class="a" style="left:483px;top:861px;width:1px;height:27px;background:#2b2b2b"></div>
<div class="t" style="left:490px;top:867px;color:#dcdcdc">位置</div><div class="t n" style="left:514.5px;top:867px">:</div><div class="t n" style="left:526.4px;top:867px">(349.000, 114.000)</div>
<div class="t" style="left:637.4px;top:867px;color:#dcdcdc">灰度</div><div class="t n" style="left:661.5px;top:867px">:</div><div class="t n" style="left:673.5px;top:867px">-8.85422e+6</div>


<!-- ===== sidebar ===== -->
<div class="a" style="left:1319px;top:32px;width:1px;height:891px;background:#252525"></div>
<div class="a" style="left:1320px;top:32px;width:44px;height:891px;background:#363636"></div>
<div class="a" style="left:1364px;top:0;width:1px;height:923px;background:#232323"></div>
<div class="a" style="left:1323px;top:43px;width:38px;height:32px;background:#262626;border:1px solid #404040;border-radius:3px"></div>
<svg style="left:1328px;top:45px" width="28" height="28">
<path d="M4.8 23.2 L17 11" stroke="#e2e2e2" stroke-width="4.6" stroke-linecap="round"/>
<circle cx="20" cy="8" r="6.4" fill="#e2e2e2"/>
<path d="M20.2 7.8 L27 1" stroke="#262626" stroke-width="4.2" stroke-linecap="butt"/>
<circle cx="20.2" cy="7.8" r="2.2" fill="#262626"/>
<circle cx="4.8" cy="23.2" r="0.9" fill="#262626"/>
</svg>
<svg style="left:1328px;top:78px" width="28" height="26">
<g fill="#e0e0e0"><rect x="2" y="4.5" width="24" height="3" rx="1"/><rect x="2" y="12" width="24" height="3" rx="1"/><rect x="2" y="19.5" width="24" height="3" rx="1"/>
<rect x="11.5" y="2" width="3" height="7.5" rx="1"/><rect x="17.5" y="9.5" width="3" height="7.5" rx="1"/><rect x="5.5" y="17" width="3" height="7.5" rx="1"/></g>
</svg>
<div class="a" style="left:1325px;top:232px;width:34px;height:1px;background:#2a2a2a"></div>
<div class="a" style="left:1323px;top:240px;width:38px;height:30px;background:#262626;border:1px solid #404040;border-radius:3px"></div>
<svg style="left:1328px;top:241px" width="28" height="28">
<circle cx="14" cy="14" r="12" fill="#e0e0e0"/>
<circle cx="13.8" cy="8.3" r="1.6" fill="#262626"/>
<path d="M11.5 11.5 H15.2 V18.5 H16.8 V20.3 H11 V18.5 H12.6 V13.3 H11.5 Z" fill="#262626"/>
</svg>
<svg style="left:1328px;top:277px" width="28" height="24">
<g fill="#e0e0e0"><rect x="2" y="1.5" width="2.2" height="19"/><rect x="2" y="18.5" width="24" height="2.2"/>
<rect x="7" y="12" width="3" height="5"/><rect x="12" y="5" width="3" height="12"/><rect x="17" y="9" width="3" height="8"/><rect x="21.5" y="3" width="3" height="14"/></g>
</svg>
<svg style="left:1328px;top:308px" width="28" height="26">
<path d="M2.3 23.5 A13.6 13.6 0 1 1 25.1 23.5 Z" fill="#e0e0e0"/>
<g fill="#2a2a2a"><circle cx="6.5" cy="9.9" r="1.4"/><circle cx="13.3" cy="6.7" r="1.4"/><circle cx="20.7" cy="9.9" r="1.4"/><circle cx="4.4" cy="17.5" r="1.4"/><circle cx="22.6" cy="17.5" r="1.4"/>
<path d="M16.6 6.2 L18.4 6.8 L15.3 17 H14.2 Z"/><rect x="11.2" y="16.2" width="5.6" height="3.8"/></g>
</svg>


<!-- ===== right tree ===== -->
<div class="a" style="left:1365px;top:31px;width:263px;height:892px;background:#2b2b2b"></div>
<div class="t" style="left:1397px;top:8px;color:#dcdcdc">结果展示</div>
<div class="a" style="left:1505px;top:0;width:1px;height:28px;background:#262626"></div>
<svg style="left:1573px;top:8px" width="18" height="14"><path d="M1.5 2.5 A1 1 0 0 1 2.5 1.5 H6.5 L8 3 H14.5 A1 1 0 0 1 15.5 4 V11.5 A1 1 0 0 1 14.5 12.5 H2.5 A1 1 0 0 1 1.5 11.5 Z" fill="#dcdcdc"/><path d="M8.5 5 V10.5 M5.8 7.8 H11.2" stroke="#333" stroke-width="1.3"/></svg>
<svg style="left:1601px;top:7px" width="16" height="15"><g fill="#dcdcdc"><rect x="1" y="1" width="6" height="2.4"/><rect x="4" y="4.6" width="11" height="2.8"/><rect x="4" y="9.6" width="11" height="2.8"/><rect x="1.5" y="3" width="1.2" height="8"/><rect x="1.5" y="5.5" width="2.5" height="1.1"/><rect x="1.5" y="10.5" width="2.5" height="1.1"/></g></svg>
<!-- tree lines -->
<div class="a" style="left:1376px;top:60px;width:2px;height:107px;background:#3a3a3a"></div>
<div class="a" style="left:1396px;top:60px;width:2px;height:94px;background:#3a3a3a"></div>
<div class="a" style="left:1397px;top:72px;width:10px;height:2px;background:#3a3a3a"></div>
<div class="a" style="left:1397px;top:99px;width:10px;height:2px;background:#3a3a3a"></div>
<div class="a" style="left:1397px;top:126px;width:10px;height:2px;background:#3a3a3a"></div>
<div class="a" style="left:1397px;top:153px;width:10px;height:2px;background:#3a3a3a"></div>
<!-- selected -->
<div class="a" style="left:1387px;top:276px;width:230px;height:27px;background:#4b4b4b"></div>
<!-- expand arrows -->
<svg style="left:1370px;top:40px" width="16" height="10"><path d="M3.6 3.6 H11.4 L7.5 7.5 Z" fill="#8a8a8a" stroke="#e2e2e2" stroke-width="1.3" stroke-linejoin="round"/></svg>
<svg style="left:1372px;top:174px" width="8" height="12"><path d="M1 1.5 V10 L6.5 5.75 Z" fill="#8a8a8a"/></svg>
<svg style="left:1372px;top:201px" width="8" height="12"><path d="M1 1.5 V10 L6.5 5.75 Z" fill="#8a8a8a"/></svg>
<svg style="left:1372px;top:228px" width="8" height="12"><path d="M1 1.5 V10 L6.5 5.75 Z" fill="#8a8a8a"/></svg>
<svg style="left:1372px;top:255px" width="8" height="12"><path d="M1 1.5 V10 L6.5 5.75 Z" fill="#8a8a8a"/></svg>
<svg style="left:1372px;top:282px" width="8" height="12"><path d="M1 1.5 V10 L6.5 5.75 Z" fill="#8a8a8a"/></svg>
<!-- node icons -->
<svg style="left:1386px;top:34px" width="24" height="24"><g fill="none" stroke="#a8a8a8" stroke-width="1" stroke-linecap="round"><path d="M11.4 4 V20"/><path d="M6.3 14.5 V11 Q6.5 8 8.5 8.5 Q10 9.5 11 11.5"/><path d="M8.2 15.5 L11.2 19"/><path d="M14.3 12.3 V19"/><path d="M13 17.3 L15.3 16.3"/><path d="M16 15.5 H17.6"/><path d="M19.5 11 V16"/><path d="M19.6 14.3 L21.5 12.5"/></g></svg>
<svg style="left:1386px;top:277px" width="24" height="24"><g fill="none" stroke="#a0a0a8" stroke-width="1" stroke-linecap="round"><path d="M11.4 4 V20"/><path d="M6.3 14.5 V11 Q6.5 8 8.5 8.5 Q10 9.5 11 11.5"/><path d="M8.2 15.5 L11.2 19"/><path d="M14.3 12.3 V19"/><path d="M13 17.3 L15.3 16.3"/><path d="M16 15.5 H17.6"/><path d="M19.5 11 V16"/><path d="M19.6 14.3 L21.5 12.5"/></g></svg>
<svg style="left:1391px;top:173px" width="18" height="16"><defs><pattern id="dt" width="2" height="2" patternUnits="userSpaceOnUse"><rect width="1.4" height="1.4" fill="#c8c8c8"/></pattern></defs><g fill="url(#dt)"><rect x="1" y="1" width="2" height="14"/><rect x="3" y="7" width="2" height="8"/><rect x="5" y="10" width="2" height="5"/><rect x="7" y="4" width="2" height="11"/><rect x="9" y="12" width="2" height="3"/><rect x="11" y="3" width="2" height="12"/><rect x="13" y="11" width="2" height="4"/><rect x="15" y="8" width="2" height="7"/></g><rect x="1" y="13" width="16" height="2" fill="#cfcfcf" opacity="0.7"/></svg>
<svg style="left:1391px;top:201px" width="18" height="14"><rect x="1" y="1" width="16" height="12" fill="#d0d0d0"/><rect x="2" y="2" width="14" height="10" fill="#9a9a9a"/><rect x="2" y="2" width="6" height="10" fill="#6a6a6a"/><rect x="9" y="3" width="6" height="8" fill="#b8b8b8"/><path d="M3 10.5 Q6 10.5 6.5 6 Q7 3 9 3" stroke="#e0e0e0" stroke-width="1" fill="none"/><g fill="#777"><circle cx="11" cy="6" r="1"/><circle cx="14" cy="9" r="1"/></g></svg>
<svg style="left:1391px;top:228px" width="18" height="14"><rect x="1" y="1" width="16" height="12" fill="#d0d0d0"/><rect x="2" y="2" width="14" height="10" fill="#a8a8a8"/><path d="M2 2 H16 L9 8 Z" fill="#707070"/><path d="M2 12 L9 7 L16 12 Z" fill="#8a8a8a"/><path d="M2 2 L9 8 L16 2" stroke="#d8d8d8" stroke-width="0.8" fill="none"/></svg>
<svg style="left:1391px;top:254px" width="18" height="17"><g fill="none" stroke="#bdbdbd" stroke-width="1"><path d="M1 1 L6 8 L1 15"/><path d="M8.5 0.5 V16"/><ellipse cx="13" cy="8" rx="2.2" ry="5.5"/><ellipse cx="13" cy="8" rx="0.8" ry="3"/></g></svg>
<!-- child icons -->
<svg style="left:1412px;top:67px" width="16" height="13"><rect x="1" y="1" width="14" height="11" rx="1.5" fill="#dcdcdc"/><path d="M3 9.8 L4.5 7.5 L6 8.8 L10.5 5 L12.8 7.5 V9.8 Z" fill="#262626"/><circle cx="4.2" cy="4.5" r="1.5" fill="#262626"/></svg>
<svg style="left:1412px;top:94px" width="16" height="13"><rect x="1" y="1" width="14" height="11" rx="1.5" fill="#dcdcdc"/><path d="M3 9.8 L4.5 7.5 L6 8.8 L10.5 5 L12.8 7.5 V9.8 Z" fill="#262626"/><circle cx="4.2" cy="4.5" r="1.5" fill="#262626"/></svg>
<svg style="left:1412px;top:119px" width="16" height="16"><g fill="none" stroke="#dcdcdc" stroke-width="2"><path d="M1.8 1.5 L8.3 8 M8.3 1.5 L1.8 8"/><path d="M3.5 9 L7.5 13.2 L14.6 6"/></g></svg>
<svg style="left:1411px;top:148px" width="20" height="13"><g fill="#dcdcdc"><path d="M3.2 1 H5.2 V11 H3.2 V3.6 L1.2 4.4 V2.6 Z"/><rect x="6" y="9" width="1.8" height="2"/><path d="M10.2 1 H12.2 V11 H10.2 V3.6 L8.4 4.4 V2.6 Z"/><path d="M15.4 1 H17.4 V11 H15.4 V3.6 L13.6 4.4 V2.6 Z"/></g></svg>
<!-- labels -->
<div class="t" style="left:1414px;top:40px;color:#e0e0e0">频域转换</div>
<div class="t" style="left:1434px;top:67px;color:#e0e0e0">输出图像</div>
<div class="t" style="left:1434px;top:94px;color:#e0e0e0">幅值图像</div>
<div class="t" style="left:1434px;top:121px;color:#e0e0e0">执行结果</div>
<div class="t" style="left:1434px;top:148px;color:#e0e0e0">执行时间</div>
<div class="t" style="left:1512px;top:67px;color:#e0e0e0;font-size:12.4px">642 x 428 COL...</div>
<div class="t" style="left:1512px;top:94px;color:#e0e0e0;font-size:12.4px">642 x 428 GRA...</div>
<div class="t" style="left:1512px;top:121px;color:#e0e0e0;font-size:12.4px">TRUE</div>
<div class="t" style="left:1512px;top:148px;color:#e0e0e0;font-size:12.4px">7.471</div>
<div class="t" style="left:1414px;top:175px;color:#e0e0e0">双阈值</div>
<div class="t" style="left:1414px;top:202px;color:#e0e0e0">图像增强</div>
<div class="t" style="left:1414px;top:229px;color:#e0e0e0">图像归一化</div>
<div class="t" style="left:1414px;top:256px;color:#e0e0e0">频域滤波</div>
<div class="t" style="left:1414px;top:283px;color:#e0e0e0">频域转换_2</div>
<!-- right edge marks -->
<svg style="left:1619px;top:256px" width="9" height="8"><g fill="#6d8fc0"><path d="M1 1 L4 3.5 L1 6 Z"/><rect x="6" y="3" width="1" height="1.5"/></g></svg>
<svg style="left:1621px;top:286px" width="7" height="6"><g fill="#55708f"><rect x="1" y="2" width="1" height="1.5"/><rect x="4" y="2" width="1" height="1.5"/></g></svg>


<!-- ===== tool panel ===== -->
<div class="a" style="left:1026px;top:32px;width:293px;height:824px;background:#2b2b2b"></div>
<div class="a" style="left:1026px;top:43px;width:293px;height:183px;background:#262626"></div><div class="a" style="left:1026px;top:240px;width:293px;height:267px;background:#262626"></div><div class="a" style="left:1025px;top:43px;width:1px;height:183px;background:#383838"></div><div class="a" style="left:1025px;top:240px;width:1px;height:267px;background:#383838"></div>
<!-- panel 1 -->
<div class="a" style="left:1026px;top:43px;width:292px;height:28px;background:#252525"></div>
<div class="a" style="left:1026px;top:43px;width:78px;height:28px;background:#383838"></div>
<div class="a" style="left:1106px;top:43px;width:42px;height:28px;background:#2c2c2c"></div>
<div class="t" style="left:1035px;top:51px;color:#e0e0e0">频域转换_2</div>
<div class="t" style="left:1115px;top:51px;color:#9a9a9a">参数</div>
<svg style="left:1298px;top:52px" width="12" height="10"><g fill="#dcdcdc"><rect x="1" y="4.3" width="4" height="1.3"/><path d="M3.8 1 L5.8 2 V8 L3.8 9 Z"/><rect x="5.5" y="3" width="4" height="3.8"/><rect x="9" y="1.8" width="2" height="6.2"/></g></svg>
<div class="a" style="left:1026px;top:72px;width:292px;height:153px;background:#363636"></div>
<div class="t" style="left:1033px;top:85px;color:#e0e0e0">工具名称:</div>
<div class="inp" style="left:1099px;top:79px;width:214px;height:23px"></div>
<div class="t" style="left:1101px;top:85px;color:#e0e0e0">频域转换_2</div>
<div class="t" style="left:1033px;top:114px;color:#e0e0e0">定位器:</div>
<div class="inp" style="left:1099px;top:109px;width:185px;height:22px"></div>
<div class="t" style="left:1103px;top:114px;color:#7a7a7a">未指定</div>
<div class="t" style="left:1033px;top:143px;color:#e0e0e0">图片输入:</div>
<div class="inp" style="left:1099px;top:138px;width:185px;height:22px"></div>
<div class="t" style="left:1103px;top:143px;color:#e0e0e0">频域滤波：输出图像</div>
<div class="t" style="left:1033px;top:172px;color:#e0e0e0">执行条件:</div>
<div class="inp" style="left:1099px;top:167px;width:214px;height:22px"></div>
<div class="t" style="left:1103px;top:172px;color:#e0e0e0">未指定</div>
<svg style="left:1272px;top:117px" width="8" height="6"><path d="M1 1.5 L3.5 4 L6 1.5" fill="none" stroke="#cfcfcf" stroke-width="1.1"/></svg>
<svg style="left:1272px;top:146px" width="8" height="6"><path d="M1 1.5 L3.5 4 L6 1.5" fill="none" stroke="#cfcfcf" stroke-width="1.1"/></svg>
<svg style="left:1301px;top:175px" width="8" height="6"><path d="M1 1.5 L3.5 4 L6 1.5" fill="none" stroke="#cfcfcf" stroke-width="1.1"/></svg>
<svg style="left:1295px;top:113px" width="12" height="16"><g fill="#e4e4e4"><path d="M6.4 0.9 L10.6 5.4 H2 Z"/><path d="M5.2 5 H7.3 V11.2 Q7.3 14.4 4 14.4 H1 V12.3 H3.9 Q5.2 12.3 5.2 11 Z"/></g></svg>
<svg style="left:1295px;top:142px" width="12" height="16"><g fill="#e4e4e4"><path d="M6.4 0.9 L10.6 5.4 H2 Z"/><path d="M5.2 5 H7.3 V11.2 Q7.3 14.4 4 14.4 H1 V12.3 H3.9 Q5.2 12.3 5.2 11 Z"/></g></svg>
<!-- icon row -->
<div class="a" style="left:1033px;top:196px;width:22px;height:21px;background:#272727;border:1px solid #404040;border-radius:3px"></div>
<svg style="left:1036px;top:198px" width="18" height="18"><path d="M5.3 9 V5.6 A3.2 3.2 0 0 1 11.7 5.6 V9" fill="none" stroke="#707070" stroke-width="1.7"/><rect x="3" y="8.5" width="11.5" height="7.2" rx="0.8" fill="#727272"/></svg>
<svg style="left:1062px;top:200px" width="18" height="14"><path d="M0.6 6.5 Q8.7 -2.6 16.8 6.5 Q8.7 15.6 0.6 6.5 Z" fill="#e4e4e4"/><circle cx="8.7" cy="6.5" r="3.1" fill="none" stroke="#2a2a2a" stroke-width="1.2"/><circle cx="7.8" cy="5.6" r="0.9" fill="#2a2a2a"/></svg>
<div class="a" style="left:1087px;top:196px;width:22px;height:21px;background:#272727;border:1px solid #404040;border-radius:3px"></div>
<svg style="left:1090px;top:199px" width="18" height="16"><g fill="none" stroke="#e8e8e8" stroke-width="1.5"><path d="M3.5 3 L13.5 13 M13.5 3 L3.5 13"/></g><g fill="#e8e8e8"><path d="M1.5 1 H6.5 L1.5 6 Z"/><path d="M15.5 1 H10.5 L15.5 6 Z"/><path d="M1.5 15 H6.5 L1.5 10 Z"/><path d="M15.5 15 H10.5 L15.5 10 Z"/></g></svg>
<svg style="left:1116px;top:199px" width="18" height="16"><g fill="#e0e0e0"><path d="M11.5 1 L15 7 H8 Z"/><circle cx="5" cy="11.5" r="3.5"/><rect x="9.5" y="8.5" width="6" height="6.5"/></g></svg>
<svg style="left:1144px;top:199px" width="16" height="16"><g fill="#e0e0e0"><rect x="1" y="2" width="2.5" height="2.5"/><rect x="5" y="2" width="9.5" height="2.5"/><rect x="1" y="6.8" width="2.5" height="2.5"/><rect x="5" y="6.8" width="9.5" height="2.5"/><rect x="1" y="11.5" width="2.5" height="2.5"/><rect x="5" y="11.5" width="9.5" height="2.5"/></g></svg>
<svg style="left:1170px;top:198px" width="18" height="18"><path d="M9 1.5 A7.5 7.5 0 0 0 9 16.5 C10.5 16.5 11 15.5 10.5 14.3 C10 13 11 12 12.3 12 H14 A3 3 0 0 0 16.5 9 A7.5 7.5 0 0 0 9 1.5 Z" fill="#e0e0e0"/><g fill="#363636"><circle cx="5" cy="9" r="1.4"/><circle cx="6.5" cy="5.2" r="1.4"/><circle cx="10.5" cy="4.5" r="1.4"/><circle cx="13.5" cy="7.2" r="1.4"/></g></svg>
<!-- panel 2 (info) -->
<div class="a" style="left:1026px;top:240px;width:292px;height:27px;background:#252525"></div>
<div class="a" style="left:1026px;top:240px;width:42px;height:27px;background:#383838"></div>
<div class="a" style="left:1070px;top:240px;width:54px;height:27px;background:#2c2c2c"></div>
<div class="a" style="left:1126px;top:240px;width:41px;height:27px;background:#2c2c2c"></div>
<div class="t" style="left:1035px;top:247px;color:#e0e0e0">信息</div>
<div class="t" style="left:1079px;top:247px;color:#a8a8a8">直方图</div>
<div class="t" style="left:1135px;top:247px;color:#a8a8a8">性能</div>
<div class="a" style="left:1026px;top:268px;width:292px;height:238px;background:#363636"></div>
<svg style="left:1264px;top:281px" width="40" height="10"><g fill="#e0e0e0"><path d="M6.5 0.5 V8.5 L2 4.5 Z"/><path d="M31 0.5 V8.5 L35.5 4.5 Z"/></g></svg>
<div class="a" style="left:1172px;top:296px;width:1px;height:124px;background:#2a2a2a"></div>
<div class="a" style="left:1033px;top:361px;width:280px;height:1px;background:#2a2a2a"></div>
<div class="a" style="left:1033px;top:420px;width:280px;height:1px;background:#2a2a2a"></div>
<svg style="left:1042px;top:384px" width="16" height="16"><g fill="none" stroke="#d0d0d0" stroke-width="1.6"><path d="M5 1 V5 H1"/><path d="M10 1 V5 H14"/><path d="M5 14 V10 H1"/><path d="M10 14 V10 H14"/></g></svg>
<svg style="left:1181px;top:382px" width="20" height="18"><g fill="none" stroke="#d0d0d0" stroke-width="1.6"><rect x="1.5" y="5" width="12" height="11.5"/><path d="M5 2 H15"/><path d="M17.5 5 V15"/></g><g fill="#d0d0d0"><path d="M4 0.5 V3.5 L2 2 Z"/><path d="M16 0.5 V3.5 L18 2 Z"/><path d="M16 4 H19 L17.5 6 Z"/><path d="M16 14 H19 L17.5 16 Z"/></g></svg>
<div class="t n" style="left:1042.4px;top:305px">R</div>
<div class="t n" style="left:1056.8px;top:305px">:</div>
<div class="t n" style="left:1066.6px;top:305px">-8854215.000</div>
<div class="t n" style="left:1042.4px;top:323px">G</div>
<div class="t n" style="left:1056.8px;top:323px">:</div>
<div class="t n" style="left:1066.6px;top:323px">-8854215.000</div>
<div class="t n" style="left:1042.4px;top:341px">B</div>
<div class="t n" style="left:1056.8px;top:341px">:</div>
<div class="t n" style="left:1066.6px;top:341px">-8854215.000</div>
<div class="t n" style="left:1182.3px;top:305px">H</div>
<div class="t n" style="left:1197px;top:305px">:</div>
<div class="t n" style="left:1206.5px;top:305px">0</div>
<div class="t n" style="left:1182.3px;top:323px">S</div>
<div class="t n" style="left:1197px;top:323px">:</div>
<div class="t n" style="left:1206.5px;top:323px">0</div>
<div class="t n" style="left:1182.3px;top:341px">V</div>
<div class="t n" style="left:1197px;top:341px">:</div>
<div class="t n" style="left:1206.5px;top:341px">-8854215.000</div>
<div class="t n" style="left:1064px;top:373px">X</div>
<div class="t n" style="left:1078.8px;top:373px">:</div>
<div class="t n" style="left:1087px;top:373px">349.000</div>
<div class="t n" style="left:1064px;top:396px">Y</div>
<div class="t n" style="left:1078.8px;top:396px">:</div>
<div class="t n" style="left:1087px;top:396px">114.000</div>
<div class="t n" style="left:1205.5px;top:373px">宽</div>
<div class="t n" style="left:1223.7px;top:373px">:</div>
<div class="t n" style="left:1232.6px;top:373px">471</div>
<div class="t n" style="left:1205.5px;top:396px">长</div>
<div class="t n" style="left:1223.7px;top:396px">:</div>
<div class="t n" style="left:1232.6px;top:396px">251</div>
<div class="t n" style="left:1042px;top:431px">源</div>
<div class="t n" style="left:1073.4px;top:431px">:</div>
<div class="t n" style="left:1081.7px;top:431px">G:\download\5BHkLgV3Utj.png</div>
<div class="t n" style="left:1042px;top:454px">尺寸</div>
<div class="t n" style="left:1071.9px;top:454px">:</div>
<div class="t n" style="left:1081.7px;top:454px">642 X 428</div>
<div class="t n" style="left:1235.4px;top:454px">位深</div>
<div class="t n" style="left:1265.2px;top:454px">:</div>
<div class="t n" style="left:1274.7px;top:454px">24</div>
<div class="t n" style="left:1042px;top:477px">帧数</div>
<div class="t n" style="left:1071.9px;top:477px">:</div>
<div class="t n" style="left:1081.7px;top:477px">0</div>

</body></html>
